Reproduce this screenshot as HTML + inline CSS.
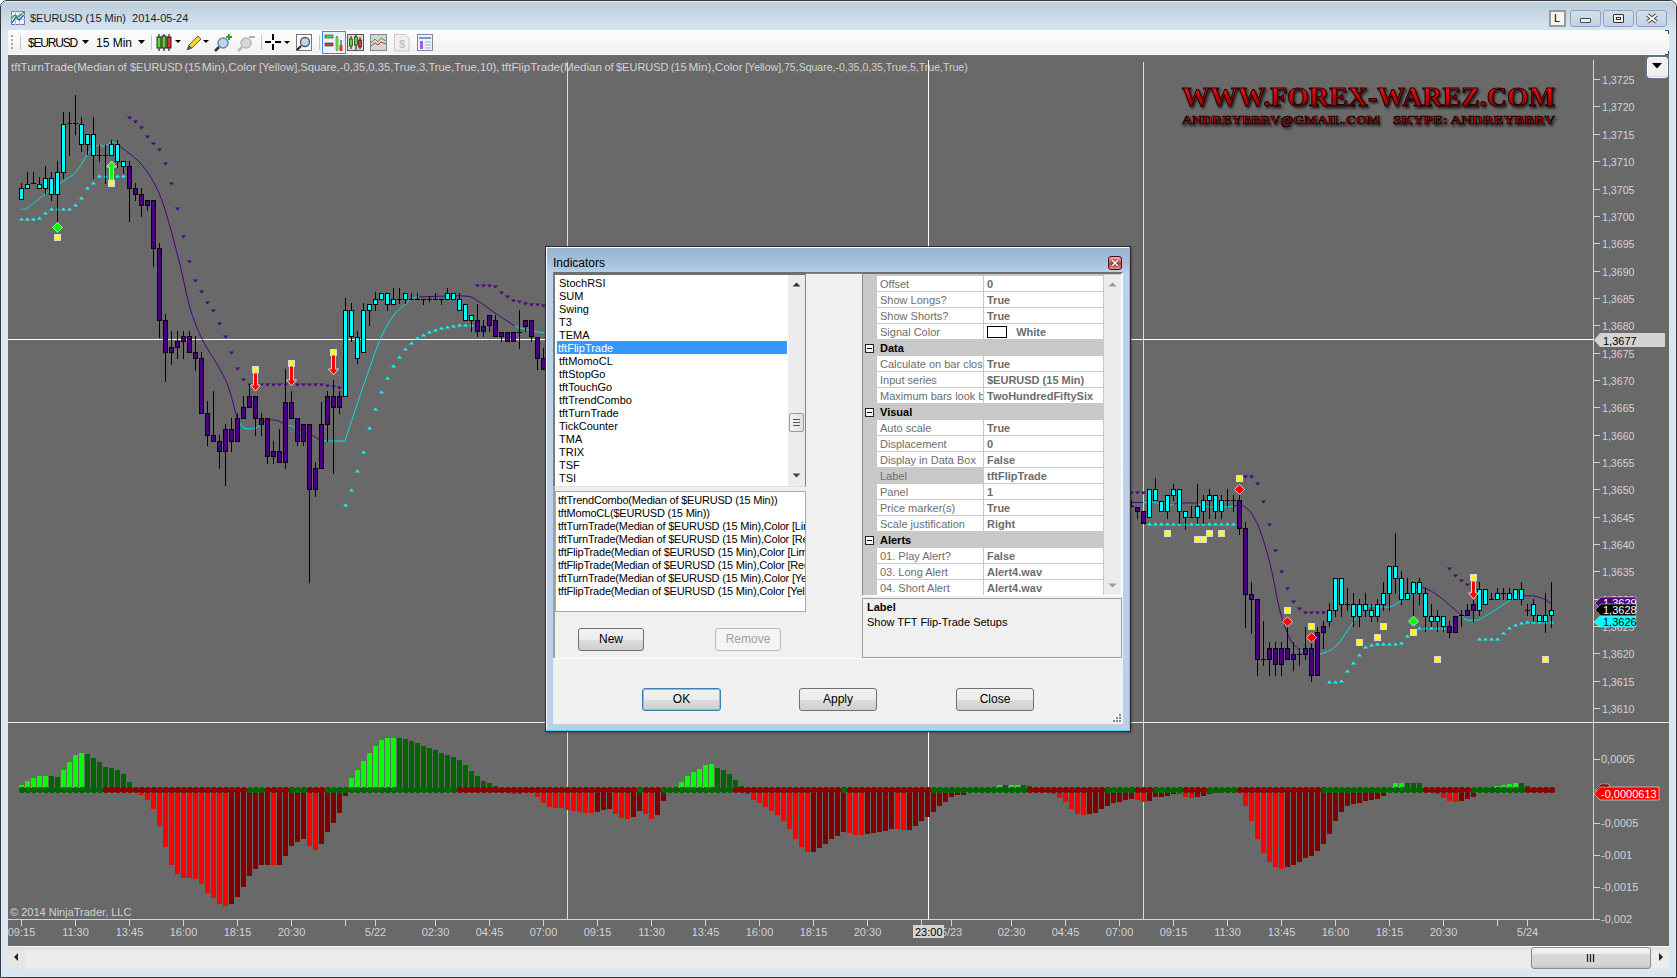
<!DOCTYPE html><html><head><meta charset="utf-8"><style>

*{box-sizing:border-box}
body{margin:0;width:1677px;height:978px;overflow:hidden;position:relative;background:#fff;font-family:'Liberation Sans',sans-serif}
.a{position:absolute}
.t{position:absolute;white-space:nowrap;line-height:1}
.btn{position:absolute;border:1px solid #707070;border-radius:3px;background:linear-gradient(#f2f2f2 0%,#ebebeb 50%,#dddddd 51%,#cfcfcf 100%);font-size:12px;color:#000;text-align:center}
.li{position:absolute;left:0;white-space:nowrap;font-size:11px;line-height:13px;height:13px}
.pr{position:absolute;left:0;width:241px;height:16px}
.pn{position:absolute;left:14px;width:106px;height:15px;background:#fff;color:#6d6d6d;font-size:11px;line-height:15px;padding-left:3px;padding-top:1px;overflow:hidden;white-space:nowrap}
.pv{position:absolute;left:121px;width:119px;height:15px;background:#fff;color:#6d6d6d;font-size:11px;font-weight:bold;line-height:15px;padding-left:3px;padding-top:1px;overflow:hidden;white-space:nowrap}
.pc{position:absolute;left:0;width:240px;height:16px;background:#c8c8c8;font-size:11px;font-weight:bold;line-height:16px;padding-left:17px;color:#000}

</style></head><body>
<div class="a" style="left:0;top:0;width:1677px;height:978px;border:1px solid #3a3a3a;border-radius:7px 7px 0 0;background:#d9e6f3"></div>
<div class="a" style="left:1px;top:1px;width:1675px;height:29px;border-radius:6px 6px 0 0;background:linear-gradient(#e9f0f7 0px,#bccddc 2px,#d7e5f2 29px)"></div>
<svg class="a" style="left:10px;top:10px" width="17" height="17"><rect x="1.5" y="1.5" width="13" height="13" fill="#f4f4fa" stroke="#7a7a9a"/><path d="M1 5.5H15M1 9.5H15M5.5 1V15M9.5 1V15" stroke="#b8b8d0" stroke-width="1"/><path d="M2 13 L6 7 L9 10 L14 5" stroke="#2060d0" fill="none" stroke-width="1.3"/><path d="M2 8 L5 5 L8 7 L14 2" stroke="#20b020" fill="none" stroke-width="1.3"/></svg>
<div class="t" style="left:30px;top:13px;font-size:11px;color:#1e1e1e">$EURUSD (15 Min)&nbsp;&nbsp;2014-05-24</div>
<div class="a" style="left:1549px;top:10px;width:17px;height:17px;border:2px solid #9a9a9a;background:#f4f4f4"></div>
<div class="t" style="left:1554px;top:13px;font-size:11px;color:#000">L</div>
<div class="a" style="left:1570px;top:10px;width:31px;height:17px;border:1px solid #8ea4c1;border-radius:3px;background:linear-gradient(#d2deea,#c3d2e2)"></div>
<div class="a" style="left:1603px;top:10px;width:31px;height:17px;border:1px solid #8ea4c1;border-radius:3px;background:linear-gradient(#d2deea,#c3d2e2)"></div>
<div class="a" style="left:1636px;top:10px;width:31px;height:17px;border:1px solid #8ea4c1;border-radius:3px;background:linear-gradient(#d2deea,#c3d2e2)"></div>
<div class="a" style="left:1580px;top:18px;width:11px;height:5px;border:1px solid #444;border-radius:1px;background:#f0f0f0"></div>
<div class="a" style="left:1613px;top:14px;width:11px;height:9px;border:1px solid #333;border-radius:1px;background:#f0f0f0"></div><div class="a" style="left:1616px;top:17px;width:5px;height:3px;border:1px solid #333"></div>
<svg class="a" style="left:1645px;top:13px" width="14" height="11"><path d="M2.5 2L11.5 9M11.5 2L2.5 9" stroke="#3a3a3a" stroke-width="4"/><path d="M2.5 2L11.5 9M11.5 2L2.5 9" stroke="#f4f4f4" stroke-width="2.2"/></svg>
<div class="a" style="left:8px;top:30px;width:1661px;height:25px;border-radius:2px;background:linear-gradient(#fdfdfd,#f1f1f1);border-bottom:1px solid #fff"></div>
<div class="a" style="left:11px;top:35px;width:2px;height:2px;background:#a8a8a8"></div>
<div class="a" style="left:11px;top:39px;width:2px;height:2px;background:#a8a8a8"></div>
<div class="a" style="left:11px;top:43px;width:2px;height:2px;background:#a8a8a8"></div>
<div class="a" style="left:11px;top:47px;width:2px;height:2px;background:#a8a8a8"></div>
<div class="a" style="left:20px;top:35px;width:1px;height:15px;background:#c4c4c4"></div>
<div class="a" style="left:151px;top:35px;width:1px;height:15px;background:#c4c4c4"></div>
<div class="a" style="left:261px;top:35px;width:1px;height:15px;background:#c4c4c4"></div>
<div class="a" style="left:319px;top:35px;width:1px;height:15px;background:#c4c4c4"></div>
<div class="t" style="left:28px;top:37px;font-size:12px;letter-spacing:-1.2px;color:#000">$EURUSD</div>
<svg class="a" style="left:82px;top:40px" width="8" height="5"><path d="M0 0H7L3.5 4Z" fill="#000"/></svg>
<div class="t" style="left:96px;top:37px;font-size:12px;color:#000">15 Min</div>
<svg class="a" style="left:138px;top:40px" width="8" height="5"><path d="M0 0H7L3.5 4Z" fill="#000"/></svg>
<svg class="a" style="left:156px;top:34px" width="36" height="18"><path d="M3 0V17M8 0V17M13 0V17" stroke="#000"/><rect x="1" y="3" width="4" height="11" fill="#5ad62f" stroke="#222"/><rect x="6" y="2" width="4" height="12" fill="#5ad62f" stroke="#222"/><rect x="11" y="3" width="4" height="11" fill="#e03030" stroke="#222"/><path d="M19 6H25L22 9Z" fill="#000"/></svg>
<svg class="a" style="left:185px;top:34px" width="24" height="18"><path d="M2 16L4 11L13 2L16 5L7 14Z" fill="#f5d33a" stroke="#806010"/><path d="M2 16L4 11L7 14Z" fill="#555"/><path d="M18 6H24L21 9Z" fill="#000"/></svg>
<svg class="a" style="left:214px;top:33px" width="20" height="19"><circle cx="9" cy="10" r="5" fill="#bcd6ee" stroke="#6a8aa8" stroke-width="1.5"/><path d="M5 14L1 18" stroke="#333" stroke-width="2.5"/><path d="M15 1V7M12 4H18" stroke="#22aa22" stroke-width="2"/></svg>
<svg class="a" style="left:237px;top:33px" width="20" height="19"><circle cx="9" cy="10" r="5" fill="#d8d8d8" stroke="#b8b8b8" stroke-width="1.5"/><path d="M5 14L1 18" stroke="#b8b8b8" stroke-width="2.5"/><path d="M12 4H18" stroke="#b0b0b0" stroke-width="2"/></svg>
<svg class="a" style="left:265px;top:34px" width="26" height="17"><path d="M8 0V6M8 10V16M0 8H6M10 8H16" stroke="#000" stroke-width="2"/><path d="M19 7H25L22 10Z" fill="#000"/></svg>
<svg class="a" style="left:295px;top:34px" width="18" height="18"><rect x="1.5" y="0.5" width="15" height="16" fill="#fafafa" stroke="#777"/><circle cx="10" cy="8" r="4.5" fill="#bcd6ee" stroke="#556" stroke-width="1.4"/><path d="M6 12L2 16" stroke="#222" stroke-width="2"/></svg>
<div class="a" style="left:322px;top:31px;width:24px;height:23px;border:1px solid #3c8ce8;background:#eaf3fc"></div>
<svg class="a" style="left:324px;top:34px" width="20" height="18"><rect x="1" y="1" width="8" height="3" fill="#5ad62f" stroke="#333" stroke-width=".6"/><rect x="1" y="9" width="8" height="3" fill="#e03030" stroke="#333" stroke-width=".6"/><path d="M13 2V17M17 6V17" stroke="#333"/><rect x="11.5" y="4" width="3" height="12" fill="#5ad62f"/><rect x="15.5" y="11" width="3" height="6" fill="#e03030"/></svg>
<svg class="a" style="left:347px;top:34px" width="18" height="18"><rect x=".5" y=".5" width="16" height="16" fill="#dcdcdc" stroke="#555"/><path d="M4 2V15M9 1V16M13 3V15" stroke="#111"/><rect x="2.5" y="5" width="3" height="7" fill="#5ad62f" stroke="#111" stroke-width=".6"/><rect x="7.5" y="3" width="3" height="8" fill="#5ad62f" stroke="#111" stroke-width=".6"/><rect x="11.5" y="6" width="3" height="7" fill="#e03030" stroke="#111" stroke-width=".6"/></svg>
<svg class="a" style="left:370px;top:34px" width="18" height="18"><rect x=".5" y=".5" width="16" height="16" fill="#d4d4d4" stroke="#888"/><path d="M1 9L5 5L8 8L11 4L16 7" stroke="#30b030" fill="none"/><path d="M1 12L5 9L8 11L11 8L16 10" stroke="#d03030" fill="none"/></svg>
<svg class="a" style="left:394px;top:34px" width="16" height="18"><path d="M.5 .5H11L15 4V17H.5Z" fill="#f0f0f0" stroke="#c8c8c8"/><text x="8" y="14" font-size="11" font-weight="bold" fill="#c0c0c0" text-anchor="middle" font-family="Liberation Sans">$</text></svg>
<svg class="a" style="left:417px;top:34px" width="16" height="18"><rect x=".5" y=".5" width="15" height="16" fill="#eef3fa" stroke="#7a8aa0"/><rect x="2" y="3" width="12" height="2" fill="#6a9ad0"/><rect x="3" y="7" width="3" height="8" fill="#9a60e0"/><path d="M8 8H14M8 11H14M8 14H14" stroke="#a0b0c8"/></svg>
<div class="a" style="left:8px;top:55px;width:1661px;height:891px;background:#696969"></div>
<div class="a" style="left:8px;top:946px;width:1661px;height:24px;background:linear-gradient(#dedede,#ececec 25%,#ececec 85%,#e6e6e6)"></div><div class="a" style="left:8px;top:947px;width:17px;height:23px;background:rgba(0,0,0,.025)"></div>
<div class="a" style="left:8px;top:946px;width:1661px;height:1px;background:#fafafa"></div>
<svg class="a" style="left:12px;top:952px" width="8" height="10"><path d="M6 1V9L2 5Z" fill="#222"/></svg>
<svg class="a" style="left:1657px;top:952px" width="8" height="10"><path d="M2 1V9L6 5Z" fill="#222"/></svg>
<div class="a" style="left:1531px;top:947px;width:120px;height:22px;border:1px solid #8a8a8a;border-radius:3px;background:linear-gradient(#f4f4f4 0%,#ececec 30%,#d9d9d9 31%,#d4d4d4 85%,#c0c0c0 100%)"></div>
<svg class="a" style="left:1586px;top:953px" width="10" height="10"><path d="M1.5 1V9M4.5 1V9M7.5 1V9" stroke="#222" stroke-width="1.3"/></svg>
<svg class="a" style="left:0;top:0" width="1677" height="978">
<defs><filter id="sh" x="-5%" y="-20%" width="110%" height="140%"><feDropShadow dx="1.5" dy="2" stdDeviation="1.2" flood-color="#000" flood-opacity="0.7"/></filter><linearGradient id="lg" x1="0" y1="0" x2="0" y2="1"><stop offset="0" stop-color="#ff3030"/><stop offset=".5" stop-color="#d00000"/><stop offset="1" stop-color="#800000"/></linearGradient></defs>
<path d="M567.5 62V919M1143.5 62V919" stroke="#dcdcdc" stroke-width="1"/>
<path d="M928.5 60V919" stroke="#fff" stroke-width="1"/>
<path d="M8 339.5H1593" stroke="#fff" stroke-width="1"/>
<path d="M8 722.5H1669" stroke="#e8e8e8" stroke-width="1"/>
<path d="M1593.5 60V919.5M8 919.5H1593.5" stroke="#d3d3d3" stroke-width="1"/>
<path d="M1593 79.5H1600" stroke="#d3d3d3"/>
<text x="1602" y="84" font-size="11" fill="#d3d3d3" font-family="Liberation Sans" textLength="32.5" lengthAdjust="spacingAndGlyphs">1,3725</text>
<path d="M1593 106.5H1600" stroke="#d3d3d3"/>
<text x="1602" y="111" font-size="11" fill="#d3d3d3" font-family="Liberation Sans" textLength="32.5" lengthAdjust="spacingAndGlyphs">1,3720</text>
<path d="M1593 134.5H1600" stroke="#d3d3d3"/>
<text x="1602" y="139" font-size="11" fill="#d3d3d3" font-family="Liberation Sans" textLength="32.5" lengthAdjust="spacingAndGlyphs">1,3715</text>
<path d="M1593 161.5H1600" stroke="#d3d3d3"/>
<text x="1602" y="166" font-size="11" fill="#d3d3d3" font-family="Liberation Sans" textLength="32.5" lengthAdjust="spacingAndGlyphs">1,3710</text>
<path d="M1593 189.5H1600" stroke="#d3d3d3"/>
<text x="1602" y="194" font-size="11" fill="#d3d3d3" font-family="Liberation Sans" textLength="32.5" lengthAdjust="spacingAndGlyphs">1,3705</text>
<path d="M1593 216.5H1600" stroke="#d3d3d3"/>
<text x="1602" y="221" font-size="11" fill="#d3d3d3" font-family="Liberation Sans" textLength="32.5" lengthAdjust="spacingAndGlyphs">1,3700</text>
<path d="M1593 243.5H1600" stroke="#d3d3d3"/>
<text x="1602" y="248" font-size="11" fill="#d3d3d3" font-family="Liberation Sans" textLength="32.5" lengthAdjust="spacingAndGlyphs">1,3695</text>
<path d="M1593 271.5H1600" stroke="#d3d3d3"/>
<text x="1602" y="276" font-size="11" fill="#d3d3d3" font-family="Liberation Sans" textLength="32.5" lengthAdjust="spacingAndGlyphs">1,3690</text>
<path d="M1593 298.5H1600" stroke="#d3d3d3"/>
<text x="1602" y="303" font-size="11" fill="#d3d3d3" font-family="Liberation Sans" textLength="32.5" lengthAdjust="spacingAndGlyphs">1,3685</text>
<path d="M1593 325.5H1600" stroke="#d3d3d3"/>
<text x="1602" y="330" font-size="11" fill="#d3d3d3" font-family="Liberation Sans" textLength="32.5" lengthAdjust="spacingAndGlyphs">1,3680</text>
<path d="M1593 353.5H1600" stroke="#d3d3d3"/>
<text x="1602" y="358" font-size="11" fill="#d3d3d3" font-family="Liberation Sans" textLength="32.5" lengthAdjust="spacingAndGlyphs">1,3675</text>
<path d="M1593 380.5H1600" stroke="#d3d3d3"/>
<text x="1602" y="385" font-size="11" fill="#d3d3d3" font-family="Liberation Sans" textLength="32.5" lengthAdjust="spacingAndGlyphs">1,3670</text>
<path d="M1593 407.5H1600" stroke="#d3d3d3"/>
<text x="1602" y="412" font-size="11" fill="#d3d3d3" font-family="Liberation Sans" textLength="32.5" lengthAdjust="spacingAndGlyphs">1,3665</text>
<path d="M1593 435.5H1600" stroke="#d3d3d3"/>
<text x="1602" y="440" font-size="11" fill="#d3d3d3" font-family="Liberation Sans" textLength="32.5" lengthAdjust="spacingAndGlyphs">1,3660</text>
<path d="M1593 462.5H1600" stroke="#d3d3d3"/>
<text x="1602" y="467" font-size="11" fill="#d3d3d3" font-family="Liberation Sans" textLength="32.5" lengthAdjust="spacingAndGlyphs">1,3655</text>
<path d="M1593 489.5H1600" stroke="#d3d3d3"/>
<text x="1602" y="494" font-size="11" fill="#d3d3d3" font-family="Liberation Sans" textLength="32.5" lengthAdjust="spacingAndGlyphs">1,3650</text>
<path d="M1593 517.5H1600" stroke="#d3d3d3"/>
<text x="1602" y="522" font-size="11" fill="#d3d3d3" font-family="Liberation Sans" textLength="32.5" lengthAdjust="spacingAndGlyphs">1,3645</text>
<path d="M1593 544.5H1600" stroke="#d3d3d3"/>
<text x="1602" y="549" font-size="11" fill="#d3d3d3" font-family="Liberation Sans" textLength="32.5" lengthAdjust="spacingAndGlyphs">1,3640</text>
<path d="M1593 571.5H1600" stroke="#d3d3d3"/>
<text x="1602" y="576" font-size="11" fill="#d3d3d3" font-family="Liberation Sans" textLength="32.5" lengthAdjust="spacingAndGlyphs">1,3635</text>
<path d="M1593 599.5H1600" stroke="#d3d3d3"/>
<text x="1602" y="604" font-size="11" fill="#d3d3d3" font-family="Liberation Sans" textLength="32.5" lengthAdjust="spacingAndGlyphs">1,3630</text>
<path d="M1593 626.5H1600" stroke="#d3d3d3"/>
<text x="1602" y="631" font-size="11" fill="#d3d3d3" font-family="Liberation Sans" textLength="32.5" lengthAdjust="spacingAndGlyphs">1,3625</text>
<path d="M1593 653.5H1600" stroke="#d3d3d3"/>
<text x="1602" y="658" font-size="11" fill="#d3d3d3" font-family="Liberation Sans" textLength="32.5" lengthAdjust="spacingAndGlyphs">1,3620</text>
<path d="M1593 681.5H1600" stroke="#d3d3d3"/>
<text x="1602" y="686" font-size="11" fill="#d3d3d3" font-family="Liberation Sans" textLength="32.5" lengthAdjust="spacingAndGlyphs">1,3615</text>
<path d="M1593 708.5H1600" stroke="#d3d3d3"/>
<text x="1602" y="713" font-size="11" fill="#d3d3d3" font-family="Liberation Sans" textLength="32.5" lengthAdjust="spacingAndGlyphs">1,3610</text>
<path d="M1593 759.5H1600" stroke="#d3d3d3"/>
<text x="1601" y="763" font-size="11" fill="#d3d3d3" font-family="Liberation Sans">0,0005</text>
<path d="M1593 823.5H1600" stroke="#d3d3d3"/>
<text x="1601" y="827" font-size="11" fill="#d3d3d3" font-family="Liberation Sans">-0,0005</text>
<path d="M1593 855.5H1600" stroke="#d3d3d3"/>
<text x="1601" y="859" font-size="11" fill="#d3d3d3" font-family="Liberation Sans">-0,001</text>
<path d="M1593 887.5H1600" stroke="#d3d3d3"/>
<text x="1601" y="891" font-size="11" fill="#d3d3d3" font-family="Liberation Sans">-0,0015</text>
<path d="M1593 919.5H1600" stroke="#d3d3d3"/>
<text x="1601" y="923" font-size="11" fill="#d3d3d3" font-family="Liberation Sans">-0,002</text>
<path d="M21.5 919V926" stroke="#d3d3d3"/>
<text x="21.5" y="936" font-size="11" fill="#d3d3d3" text-anchor="middle" font-family="Liberation Sans">09:15</text>
<path d="M75.5 919V926" stroke="#d3d3d3"/>
<text x="75.5" y="936" font-size="11" fill="#d3d3d3" text-anchor="middle" font-family="Liberation Sans">11:30</text>
<path d="M129.5 919V926" stroke="#d3d3d3"/>
<text x="129.5" y="936" font-size="11" fill="#d3d3d3" text-anchor="middle" font-family="Liberation Sans">13:45</text>
<path d="M183.5 919V926" stroke="#d3d3d3"/>
<text x="183.5" y="936" font-size="11" fill="#d3d3d3" text-anchor="middle" font-family="Liberation Sans">16:00</text>
<path d="M237.5 919V926" stroke="#d3d3d3"/>
<text x="237.5" y="936" font-size="11" fill="#d3d3d3" text-anchor="middle" font-family="Liberation Sans">18:15</text>
<path d="M291.5 919V926" stroke="#d3d3d3"/>
<text x="291.5" y="936" font-size="11" fill="#d3d3d3" text-anchor="middle" font-family="Liberation Sans">20:30</text>
<path d="M345.5 919V926" stroke="#d3d3d3"/>
<path d="M375.5 919V926" stroke="#d3d3d3"/>
<text x="375.5" y="936" font-size="11" fill="#d3d3d3" text-anchor="middle" font-family="Liberation Sans">5/22</text>
<path d="M435.5 919V926" stroke="#d3d3d3"/>
<text x="435.5" y="936" font-size="11" fill="#d3d3d3" text-anchor="middle" font-family="Liberation Sans">02:30</text>
<path d="M489.5 919V926" stroke="#d3d3d3"/>
<text x="489.5" y="936" font-size="11" fill="#d3d3d3" text-anchor="middle" font-family="Liberation Sans">04:45</text>
<path d="M543.5 919V926" stroke="#d3d3d3"/>
<text x="543.5" y="936" font-size="11" fill="#d3d3d3" text-anchor="middle" font-family="Liberation Sans">07:00</text>
<path d="M597.5 919V926" stroke="#d3d3d3"/>
<text x="597.5" y="936" font-size="11" fill="#d3d3d3" text-anchor="middle" font-family="Liberation Sans">09:15</text>
<path d="M651.5 919V926" stroke="#d3d3d3"/>
<text x="651.5" y="936" font-size="11" fill="#d3d3d3" text-anchor="middle" font-family="Liberation Sans">11:30</text>
<path d="M705.5 919V926" stroke="#d3d3d3"/>
<text x="705.5" y="936" font-size="11" fill="#d3d3d3" text-anchor="middle" font-family="Liberation Sans">13:45</text>
<path d="M759.5 919V926" stroke="#d3d3d3"/>
<text x="759.5" y="936" font-size="11" fill="#d3d3d3" text-anchor="middle" font-family="Liberation Sans">16:00</text>
<path d="M813.5 919V926" stroke="#d3d3d3"/>
<text x="813.5" y="936" font-size="11" fill="#d3d3d3" text-anchor="middle" font-family="Liberation Sans">18:15</text>
<path d="M867.5 919V926" stroke="#d3d3d3"/>
<text x="867.5" y="936" font-size="11" fill="#d3d3d3" text-anchor="middle" font-family="Liberation Sans">20:30</text>
<path d="M921.5 919V926" stroke="#d3d3d3"/>
<path d="M951.5 919V926" stroke="#d3d3d3"/>
<text x="951.5" y="936" font-size="11" fill="#d3d3d3" text-anchor="middle" font-family="Liberation Sans">5/23</text>
<path d="M1011.5 919V926" stroke="#d3d3d3"/>
<text x="1011.5" y="936" font-size="11" fill="#d3d3d3" text-anchor="middle" font-family="Liberation Sans">02:30</text>
<path d="M1065.5 919V926" stroke="#d3d3d3"/>
<text x="1065.5" y="936" font-size="11" fill="#d3d3d3" text-anchor="middle" font-family="Liberation Sans">04:45</text>
<path d="M1119.5 919V926" stroke="#d3d3d3"/>
<text x="1119.5" y="936" font-size="11" fill="#d3d3d3" text-anchor="middle" font-family="Liberation Sans">07:00</text>
<path d="M1173.5 919V926" stroke="#d3d3d3"/>
<text x="1173.5" y="936" font-size="11" fill="#d3d3d3" text-anchor="middle" font-family="Liberation Sans">09:15</text>
<path d="M1227.5 919V926" stroke="#d3d3d3"/>
<text x="1227.5" y="936" font-size="11" fill="#d3d3d3" text-anchor="middle" font-family="Liberation Sans">11:30</text>
<path d="M1281.5 919V926" stroke="#d3d3d3"/>
<text x="1281.5" y="936" font-size="11" fill="#d3d3d3" text-anchor="middle" font-family="Liberation Sans">13:45</text>
<path d="M1335.5 919V926" stroke="#d3d3d3"/>
<text x="1335.5" y="936" font-size="11" fill="#d3d3d3" text-anchor="middle" font-family="Liberation Sans">16:00</text>
<path d="M1389.5 919V926" stroke="#d3d3d3"/>
<text x="1389.5" y="936" font-size="11" fill="#d3d3d3" text-anchor="middle" font-family="Liberation Sans">18:15</text>
<path d="M1443.5 919V926" stroke="#d3d3d3"/>
<text x="1443.5" y="936" font-size="11" fill="#d3d3d3" text-anchor="middle" font-family="Liberation Sans">20:30</text>
<path d="M1497.5 919V926" stroke="#d3d3d3"/>
<path d="M1527.5 919V926" stroke="#d3d3d3"/>
<text x="1527.5" y="936" font-size="11" fill="#d3d3d3" text-anchor="middle" font-family="Liberation Sans">5/24</text>
<text x="10" y="916" font-size="11" fill="#d3d3d3" font-family="Liberation Sans">© 2014 NinjaTrader, LLC</text>
<text x="11" y="71" font-size="11" fill="#d3d3d3" font-family="Liberation Sans" textLength="103.9" lengthAdjust="spacingAndGlyphs">tftTurnTrade(Median</text>
<text x="117.4" y="71" font-size="11" fill="#d3d3d3" font-family="Liberation Sans">of</text>
<text x="130" y="71" font-size="11" fill="#d3d3d3" font-family="Liberation Sans">$EURUSD</text>
<text x="184.6" y="71" font-size="11" fill="#d3d3d3" font-family="Liberation Sans">(15</text>
<text x="201.8" y="71" font-size="11" fill="#d3d3d3" font-family="Liberation Sans" textLength="54.7" lengthAdjust="spacingAndGlyphs">Min),Color</text>
<text x="259" y="71" font-size="11" fill="#d3d3d3" font-family="Liberation Sans" textLength="240.3" lengthAdjust="spacingAndGlyphs">[Yellow],Square,-0,35,0,35,True,3,True,True,10),</text>
<text x="501.8" y="71" font-size="11" fill="#d3d3d3" font-family="Liberation Sans" textLength="100.2" lengthAdjust="spacingAndGlyphs">tftFlipTrade(Median</text>
<text x="604.5" y="71" font-size="11" fill="#d3d3d3" font-family="Liberation Sans">of</text>
<text x="616" y="71" font-size="11" fill="#d3d3d3" font-family="Liberation Sans">$EURUSD</text>
<text x="670.7" y="71" font-size="11" fill="#d3d3d3" font-family="Liberation Sans">(15</text>
<text x="688.6" y="71" font-size="11" fill="#d3d3d3" font-family="Liberation Sans" textLength="54.1" lengthAdjust="spacingAndGlyphs">Min),Color</text>
<text x="745.2" y="71" font-size="11" fill="#d3d3d3" font-family="Liberation Sans" textLength="222.5" lengthAdjust="spacingAndGlyphs">[Yellow],75,Square,-0,35,0,35,True,5,True,True)</text>
<rect x="913" y="925" width="31" height="13" fill="#d3d3d3"/><text x="915" y="936" font-size="11" fill="#000" font-family="Liberation Sans">23:00</text>
<path d="M1594 340L1600 333H1665V347H1600Z" fill="#d3d3d3"/><text x="1603" y="345" font-size="11" fill="#000" font-family="Liberation Sans">1,3677</text>
<g filter="url(#sh)"><text x="1182" y="106" font-size="28" font-weight="bold" font-family="Liberation Serif" fill="url(#lg)" stroke="#200000" stroke-width="1.1" textLength="373" lengthAdjust="spacingAndGlyphs">WWW.FOREX-WAREZ.COM</text><text x="1182" y="124" font-size="12" font-weight="bold" font-family="Liberation Serif" fill="#b00000" stroke="#200000" stroke-width="0.7" textLength="198" lengthAdjust="spacingAndGlyphs">ANDREYBBRV@GMAIL.COM</text><text x="1393" y="124" font-size="12" font-weight="bold" font-family="Liberation Serif" fill="#b00000" stroke="#200000" stroke-width="0.7" textLength="162" lengthAdjust="spacingAndGlyphs">SKYPE: ANDREYBBRV</text></g>
<path d="M21 209 C22.0 208.8 23.0 210.5 27 208 C31.0 205.5 39.2 198.3 45 194 C50.8 189.7 56.8 185.7 62 182 C67.2 178.3 71.8 176.5 76 172 C80.2 167.5 84.0 159.3 87 155 C90.0 150.7 91.0 147.5 94 146 C97.0 144.5 102.0 146.7 105 146 C108.0 145.3 109.8 142.2 112 142 C114.2 141.8 117.0 144.5 118 145" fill="none" stroke="#00e5e5" stroke-width="1"/>
<path d="M118 145 C122.0 148.3 135.2 157.0 142 165 C148.8 173.0 154.2 182.2 159 193 C163.8 203.8 167.3 217.3 171 230 C174.7 242.7 177.8 256.0 181 269 C184.2 282.0 186.5 296.3 190 308 C193.5 319.7 197.3 329.3 202 339 C206.7 348.7 213.7 358.2 218 366 C222.3 373.8 224.8 377.3 228 386 C231.2 394.7 235.5 412.7 237 418" fill="none" stroke="#4b0082" stroke-width="1"/>
<path d="M237 418 C238.2 419.7 240.8 426.3 244 428 C247.2 429.7 253.0 428.8 256 428 C259.0 427.2 261.0 423.8 262 423" fill="none" stroke="#00e5e5" stroke-width="1"/>
<path d="M262 423 C263.3 422.5 267.2 420.3 270 420 C272.8 419.7 276.3 420.0 279 421 C281.7 422.0 284.8 425.2 286 426" fill="none" stroke="#4b0082" stroke-width="1"/>
<path d="M286 426 C287.0 426.0 289.8 425.0 292 426 C294.2 427.0 296.8 430.8 299 432 C301.2 433.2 304.0 432.8 305 433" fill="none" stroke="#00e5e5" stroke-width="1"/>
<path d="M305 433 C306.2 433.3 309.3 433.7 312 435 C314.7 436.3 319.5 440.0 321 441" fill="none" stroke="#4b0082" stroke-width="1"/>
<path d="M321 441 L345 441" fill="none" stroke="#00e5e5" stroke-width="1"/>
<path d="M345 441 C348.0 432.0 357.2 403.8 363 387 C368.8 370.2 374.8 352.0 380 340 C385.2 328.0 388.7 321.8 394 315 C399.3 308.2 407.8 302.0 412 299 C416.2 296.0 417.8 297.3 419 297" fill="none" stroke="#00e5e5" stroke-width="1"/>
<path d="M419 297 C426.5 296.8 454.2 295.3 464 296 C473.8 296.7 472.8 298.2 478 301 C483.2 303.8 488.8 308.8 495 313 C501.2 317.2 511.7 323.8 515 326" fill="none" stroke="#4b0082" stroke-width="1"/>
<path d="M515 326 C516.5 326.5 519.2 327.8 524 329 C528.8 330.2 540.7 332.3 544 333" fill="none" stroke="#00e5e5" stroke-width="1"/>
<path d="M1131 502.5 L1143 502.5" fill="none" stroke="#4b0082" stroke-width="1"/>
<path d="M1143 502.5 C1145.0 502.5 1152.0 502.1 1155 502.5 C1158.0 502.9 1158.8 504.4 1161 505 C1163.2 505.6 1165.8 506.2 1168 506 C1170.2 505.8 1173.0 504.3 1174 504" fill="none" stroke="#00e5e5" stroke-width="1"/>
<path d="M1174 504 C1175.0 503.8 1176.2 503.2 1180 503 C1183.8 502.8 1194.2 503.0 1197 503" fill="none" stroke="#4b0082" stroke-width="1"/>
<path d="M1197 503 C1198.0 503.5 1200.0 505.3 1203 506 C1206.0 506.7 1210.0 506.9 1215 507 C1220.0 507.1 1230.0 506.6 1233 506.5" fill="none" stroke="#00e5e5" stroke-width="1"/>
<path d="M1233 506.5 C1234.0 506.2 1237.0 504.9 1239 505 C1241.0 505.1 1242.8 505.5 1245 507 C1247.2 508.5 1249.3 509.7 1252 514 C1254.7 518.3 1257.8 524.0 1261 533 C1264.2 542.0 1267.8 555.0 1271 568 C1274.2 581.0 1276.8 599.2 1280 611 C1283.2 622.8 1286.8 632.5 1290 639 C1293.2 645.5 1297.5 648.2 1299 650" fill="none" stroke="#4b0082" stroke-width="1"/>
<path d="M1299 650 C1300.5 650.5 1304.5 652.3 1308 653 C1311.5 653.7 1315.5 655.0 1320 654 C1324.5 653.0 1330.3 651.0 1335 647 C1339.7 643.0 1343.7 636.0 1348 630 C1352.3 624.0 1357.0 615.0 1361 611 C1365.0 607.0 1367.2 606.7 1372 606 C1376.8 605.3 1384.5 608.3 1390 607 C1395.5 605.7 1400.2 601.2 1405 598 C1409.8 594.8 1416.7 589.7 1419 588" fill="none" stroke="#00e5e5" stroke-width="1"/>
<path d="M1419 588 C1420.0 588.0 1421.5 586.5 1425 588 C1428.5 589.5 1434.0 592.5 1440 597 C1446.0 601.5 1457.5 612.0 1461 615" fill="none" stroke="#4b0082" stroke-width="1"/>
<path d="M1461 615 C1462.0 615.8 1464.0 619.2 1467 620 C1470.0 620.8 1477.0 620.0 1479 620" fill="none" stroke="#00e5e5" stroke-width="1"/>
<path d="M1479 620 C1481.7 618.3 1489.2 613.7 1495 610 C1500.8 606.3 1509.8 600.3 1514 598 C1518.2 595.7 1519.0 596.3 1520 596" fill="none" stroke="#00e5e5" stroke-width="1"/>
<path d="M1520 596 C1522.2 596.0 1529.0 595.5 1533 596 C1537.0 596.5 1540.8 597.7 1544 599 C1547.2 600.3 1550.7 603.2 1552 604" fill="none" stroke="#4b0082" stroke-width="1"/>
<path d="M19 220.5H24L21.5 217.5Z" fill="#00ffff"/>
<path d="M25 220.5H30L27.5 217.5Z" fill="#00ffff"/>
<path d="M31 220.5H36L33.5 217.5Z" fill="#00ffff"/>
<path d="M37 219.5H42L39.5 216.5Z" fill="#00ffff"/>
<path d="M43 214.5H48L45.5 211.5Z" fill="#00ffff"/>
<path d="M49 210.5H54L51.5 207.5Z" fill="#00ffff"/>
<path d="M55 210.5H60L57.5 207.5Z" fill="#00ffff"/>
<path d="M61 210.5H66L63.5 207.5Z" fill="#00ffff"/>
<path d="M67 210.5H72L69.5 207.5Z" fill="#00ffff"/>
<path d="M73 206.5H78L75.5 203.5Z" fill="#00ffff"/>
<path d="M79 199.5H84L81.5 196.5Z" fill="#00ffff"/>
<path d="M85 189.5H90L87.5 186.5Z" fill="#00ffff"/>
<path d="M91 184.5H96L93.5 181.5Z" fill="#00ffff"/>
<path d="M97 177.5H102L99.5 174.5Z" fill="#00ffff"/>
<path d="M103 177.5H108L105.5 174.5Z" fill="#00ffff"/>
<path d="M115 177.5H120L117.5 174.5Z" fill="#00ffff"/>
<path d="M121 177.5H126L123.5 174.5Z" fill="#00ffff"/>
<path d="M343 506.5H348L345.5 503.5Z" fill="#00ffff"/>
<path d="M349 491.5H354L351.5 488.5Z" fill="#00ffff"/>
<path d="M355 472.5H360L357.5 469.5Z" fill="#00ffff"/>
<path d="M361 453.5H366L363.5 450.5Z" fill="#00ffff"/>
<path d="M367 429.5H372L369.5 426.5Z" fill="#00ffff"/>
<path d="M373 410.5H378L375.5 407.5Z" fill="#00ffff"/>
<path d="M379 393.5H384L381.5 390.5Z" fill="#00ffff"/>
<path d="M385 379.5H390L387.5 376.5Z" fill="#00ffff"/>
<path d="M391 367.5H396L393.5 364.5Z" fill="#00ffff"/>
<path d="M397 358.5H402L399.5 355.5Z" fill="#00ffff"/>
<path d="M403 350.5H408L405.5 347.5Z" fill="#00ffff"/>
<path d="M409 344.5H414L411.5 341.5Z" fill="#00ffff"/>
<path d="M415 339.5H420L417.5 336.5Z" fill="#00ffff"/>
<path d="M421 336.5H426L423.5 333.5Z" fill="#00ffff"/>
<path d="M427 333.5H432L429.5 330.5Z" fill="#00ffff"/>
<path d="M433 331.5H438L435.5 328.5Z" fill="#00ffff"/>
<path d="M439 329.5H444L441.5 326.5Z" fill="#00ffff"/>
<path d="M445 328.5H450L447.5 325.5Z" fill="#00ffff"/>
<path d="M451 327.5H456L453.5 324.5Z" fill="#00ffff"/>
<path d="M457 326.5H462L459.5 323.5Z" fill="#00ffff"/>
<path d="M463 326.5H468L465.5 323.5Z" fill="#00ffff"/>
<path d="M469 326.5H474L471.5 323.5Z" fill="#00ffff"/>
<path d="M1327 683.5H1332L1329.5 680.5Z" fill="#00ffff"/>
<path d="M1333 683.5H1338L1335.5 680.5Z" fill="#00ffff"/>
<path d="M1339 682.5H1344L1341.5 679.5Z" fill="#00ffff"/>
<path d="M1345 672.5H1350L1347.5 669.5Z" fill="#00ffff"/>
<path d="M1351 664.5H1356L1353.5 661.5Z" fill="#00ffff"/>
<path d="M1357 656.5H1362L1359.5 653.5Z" fill="#00ffff"/>
<path d="M1363 648.5H1368L1365.5 645.5Z" fill="#00ffff"/>
<path d="M1369 646.5H1374L1371.5 643.5Z" fill="#00ffff"/>
<path d="M1375 645.5H1380L1377.5 642.5Z" fill="#00ffff"/>
<path d="M1381 645.5H1386L1383.5 642.5Z" fill="#00ffff"/>
<path d="M1387 645.5H1392L1389.5 642.5Z" fill="#00ffff"/>
<path d="M1393 645.5H1398L1395.5 642.5Z" fill="#00ffff"/>
<path d="M1399 644.5H1404L1401.5 641.5Z" fill="#00ffff"/>
<path d="M1405 637.5H1410L1407.5 634.5Z" fill="#00ffff"/>
<path d="M1417 629.5H1422L1419.5 626.5Z" fill="#00ffff"/>
<path d="M1423 629.5H1428L1425.5 626.5Z" fill="#00ffff"/>
<path d="M1429 629.5H1434L1431.5 626.5Z" fill="#00ffff"/>
<path d="M1435 629.5H1440L1437.5 626.5Z" fill="#00ffff"/>
<path d="M1441 629.5H1446L1443.5 626.5Z" fill="#00ffff"/>
<path d="M1477 640.5H1482L1479.5 637.5Z" fill="#00ffff"/>
<path d="M1483 640.5H1488L1485.5 637.5Z" fill="#00ffff"/>
<path d="M1489 640.5H1494L1491.5 637.5Z" fill="#00ffff"/>
<path d="M1495 640.5H1500L1497.5 637.5Z" fill="#00ffff"/>
<path d="M1501 634.5H1506L1503.5 631.5Z" fill="#00ffff"/>
<path d="M1507 629.5H1512L1509.5 626.5Z" fill="#00ffff"/>
<path d="M1513 626.5H1518L1515.5 623.5Z" fill="#00ffff"/>
<path d="M1519 624.5H1524L1521.5 621.5Z" fill="#00ffff"/>
<path d="M1525 623.5H1530L1527.5 620.5Z" fill="#00ffff"/>
<path d="M1531 623.5H1536L1533.5 620.5Z" fill="#00ffff"/>
<path d="M1537 623.5H1542L1539.5 620.5Z" fill="#00ffff"/>
<path d="M1543 623.5H1548L1545.5 620.5Z" fill="#00ffff"/>
<path d="M1549 623.5H1554L1551.5 620.5Z" fill="#00ffff"/>
<path d="M1147 525.5H1152L1149.5 522.5Z" fill="#00ffff"/>
<path d="M1153 525.5H1158L1155.5 522.5Z" fill="#00ffff"/>
<path d="M1159 525.5H1164L1161.5 522.5Z" fill="#00ffff"/>
<path d="M1165 525.5H1170L1167.5 522.5Z" fill="#00ffff"/>
<path d="M1171 525.5H1176L1173.5 522.5Z" fill="#00ffff"/>
<path d="M1177 525.5H1182L1179.5 522.5Z" fill="#00ffff"/>
<path d="M1183 525.5H1188L1185.5 522.5Z" fill="#00ffff"/>
<path d="M1189 525.5H1194L1191.5 522.5Z" fill="#00ffff"/>
<path d="M1195 525.5H1200L1197.5 522.5Z" fill="#00ffff"/>
<path d="M1201 525.5H1206L1203.5 522.5Z" fill="#00ffff"/>
<path d="M1207 525.5H1212L1209.5 522.5Z" fill="#00ffff"/>
<path d="M1213 525.5H1218L1215.5 522.5Z" fill="#00ffff"/>
<path d="M1219 525.5H1224L1221.5 522.5Z" fill="#00ffff"/>
<path d="M1225 525.5H1230L1227.5 522.5Z" fill="#00ffff"/>
<path d="M1231 525.5H1236L1233.5 522.5Z" fill="#00ffff"/>
<path d="M127 116.5H132L129.5 119.5Z" fill="#4b0082"/>
<path d="M133 120.5H138L135.5 123.5Z" fill="#4b0082"/>
<path d="M139 126.5H144L141.5 129.5Z" fill="#4b0082"/>
<path d="M145 135.5H150L147.5 138.5Z" fill="#4b0082"/>
<path d="M151 142.5H156L153.5 145.5Z" fill="#4b0082"/>
<path d="M157 148.5H162L159.5 151.5Z" fill="#4b0082"/>
<path d="M163 162.5H168L165.5 165.5Z" fill="#4b0082"/>
<path d="M169 182.5H174L171.5 185.5Z" fill="#4b0082"/>
<path d="M175 207.5H180L177.5 210.5Z" fill="#4b0082"/>
<path d="M181 235.5H186L183.5 238.5Z" fill="#4b0082"/>
<path d="M187 260.5H192L189.5 263.5Z" fill="#4b0082"/>
<path d="M193 279.5H198L195.5 282.5Z" fill="#4b0082"/>
<path d="M199 290.5H204L201.5 293.5Z" fill="#4b0082"/>
<path d="M205 301.5H210L207.5 304.5Z" fill="#4b0082"/>
<path d="M211 309.5H216L213.5 312.5Z" fill="#4b0082"/>
<path d="M217 322.5H222L219.5 325.5Z" fill="#4b0082"/>
<path d="M223 335.5H228L225.5 338.5Z" fill="#4b0082"/>
<path d="M229 351.5H234L231.5 354.5Z" fill="#4b0082"/>
<path d="M235 367.5H240L237.5 370.5Z" fill="#4b0082"/>
<path d="M241 378.5H246L243.5 381.5Z" fill="#4b0082"/>
<path d="M325 384.5H330L327.5 387.5Z" fill="#4b0082"/>
<path d="M331 385.5H336L333.5 388.5Z" fill="#4b0082"/>
<path d="M337 386.5H342L339.5 389.5Z" fill="#4b0082"/>
<path d="M475 284.5H480L477.5 287.5Z" fill="#4b0082"/>
<path d="M481 284.5H486L483.5 287.5Z" fill="#4b0082"/>
<path d="M487 284.5H492L489.5 287.5Z" fill="#4b0082"/>
<path d="M493 285.5H498L495.5 288.5Z" fill="#4b0082"/>
<path d="M499 291.5H504L501.5 294.5Z" fill="#4b0082"/>
<path d="M505 295.5H510L507.5 298.5Z" fill="#4b0082"/>
<path d="M511 299.5H516L513.5 302.5Z" fill="#4b0082"/>
<path d="M517 300.5H522L519.5 303.5Z" fill="#4b0082"/>
<path d="M523 302.5H528L525.5 305.5Z" fill="#4b0082"/>
<path d="M529 303.5H534L531.5 306.5Z" fill="#4b0082"/>
<path d="M535 303.5H540L537.5 306.5Z" fill="#4b0082"/>
<path d="M541 304.5H546L543.5 307.5Z" fill="#4b0082"/>
<path d="M1129 491.5H1134L1131.5 494.5Z" fill="#4b0082"/>
<path d="M1135 491.5H1140L1137.5 494.5Z" fill="#4b0082"/>
<path d="M1141 491.5H1146L1143.5 494.5Z" fill="#4b0082"/>
<path d="M1243 475.5H1248L1245.5 478.5Z" fill="#4b0082"/>
<path d="M1249 475.5H1254L1251.5 478.5Z" fill="#4b0082"/>
<path d="M1255 482.5H1260L1257.5 485.5Z" fill="#4b0082"/>
<path d="M1261 500.5H1266L1263.5 503.5Z" fill="#4b0082"/>
<path d="M1267 523.5H1272L1269.5 526.5Z" fill="#4b0082"/>
<path d="M1273 549.5H1278L1275.5 552.5Z" fill="#4b0082"/>
<path d="M1279 570.5H1284L1281.5 573.5Z" fill="#4b0082"/>
<path d="M1285 587.5H1290L1287.5 590.5Z" fill="#4b0082"/>
<path d="M1291 600.5H1296L1293.5 603.5Z" fill="#4b0082"/>
<path d="M1297 607.5H1302L1299.5 610.5Z" fill="#4b0082"/>
<path d="M1303 611.5H1308L1305.5 614.5Z" fill="#4b0082"/>
<path d="M1309 611.5H1314L1311.5 614.5Z" fill="#4b0082"/>
<path d="M1315 611.5H1320L1317.5 614.5Z" fill="#4b0082"/>
<path d="M1321 611.5H1326L1323.5 614.5Z" fill="#4b0082"/>
<path d="M1447 567.5H1452L1449.5 570.5Z" fill="#4b0082"/>
<path d="M1453 574.5H1458L1455.5 577.5Z" fill="#4b0082"/>
<path d="M1459 579.5H1464L1461.5 582.5Z" fill="#4b0082"/>
<path d="M1465 583.5H1470L1467.5 586.5Z" fill="#4b0082"/>
<path d="M247 383.5H252L249.5 386.5Z" fill="#4b0082"/>
<path d="M253 383.5H258L255.5 386.5Z" fill="#4b0082"/>
<path d="M259 383.5H264L261.5 386.5Z" fill="#4b0082"/>
<path d="M265 383.5H270L267.5 386.5Z" fill="#4b0082"/>
<path d="M271 383.5H276L273.5 386.5Z" fill="#4b0082"/>
<path d="M277 383.5H282L279.5 386.5Z" fill="#4b0082"/>
<path d="M283 383.5H288L285.5 386.5Z" fill="#4b0082"/>
<path d="M289 383.5H294L291.5 386.5Z" fill="#4b0082"/>
<path d="M295 383.5H300L297.5 386.5Z" fill="#4b0082"/>
<path d="M301 383.5H306L303.5 386.5Z" fill="#4b0082"/>
<path d="M307 383.5H312L309.5 386.5Z" fill="#4b0082"/>
<path d="M313 383.5H318L315.5 386.5Z" fill="#4b0082"/>
<path d="M319 383.5H324L321.5 386.5Z" fill="#4b0082"/>
<path d="M21.5 183V200" stroke="#000"/>
<rect x="19.5" y="188.5" width="4" height="11" fill="#00ffff" stroke="#000"/>
<path d="M27.5 172V189" stroke="#000"/>
<rect x="25.5" y="184.5" width="4" height="4" fill="#00ffff" stroke="#000"/>
<path d="M33.5 172V184" stroke="#000"/>
<path d="M31 183.5H36" stroke="#000"/>
<path d="M39.5 177V189" stroke="#000"/>
<rect x="37.5" y="184.5" width="4" height="4" fill="#00ffff" stroke="#000"/>
<path d="M45.5 166V194" stroke="#000"/>
<rect x="43.5" y="178.5" width="4" height="10" fill="#00ffff" stroke="#000"/>
<path d="M51.5 172V201" stroke="#000"/>
<rect x="49.5" y="178.5" width="4" height="16" fill="#00ffff" stroke="#000"/>
<path d="M57.5 161V222" stroke="#000"/>
<rect x="55.5" y="172.5" width="4" height="22" fill="#00ffff" stroke="#000"/>
<path d="M63.5 112V179" stroke="#000"/>
<rect x="61.5" y="124.5" width="4" height="48" fill="#00ffff" stroke="#000"/>
<path d="M69.5 112V156" stroke="#000"/>
<path d="M67 123.5H72" stroke="#000"/>
<path d="M75.5 95V135" stroke="#000"/>
<path d="M73 123.5H78" stroke="#000"/>
<path d="M81.5 117V152" stroke="#000"/>
<rect x="79.5" y="124.5" width="4" height="20" fill="#00ffff" stroke="#000"/>
<path d="M87.5 134V155" stroke="#000"/>
<rect x="85.5" y="134.5" width="4" height="10" fill="#00ffff" stroke="#000"/>
<path d="M93.5 117V179" stroke="#000"/>
<rect x="91.5" y="134.5" width="4" height="21" fill="#00ffff" stroke="#000"/>
<path d="M99.5 145V162" stroke="#000"/>
<path d="M97 155.5H102" stroke="#000"/>
<path d="M105.5 145V184" stroke="#000"/>
<path d="M103 155.5H108" stroke="#000"/>
<path d="M111.5 140V156" stroke="#000"/>
<rect x="109.5" y="144.5" width="4" height="11" fill="#00ffff" stroke="#000"/>
<path d="M117.5 140V168" stroke="#000"/>
<rect x="115.5" y="144.5" width="4" height="17" fill="#00ffff" stroke="#000"/>
<path d="M123.5 161V174" stroke="#000"/>
<rect x="121.5" y="161.5" width="4" height="5" fill="#00ffff" stroke="#000"/>
<path d="M129.5 161V222" stroke="#000"/>
<rect x="127.5" y="166.5" width="4" height="22" fill="#4b0082" stroke="#000"/>
<path d="M135.5 183V201" stroke="#000"/>
<rect x="133.5" y="188.5" width="4" height="6" fill="#4b0082" stroke="#000"/>
<path d="M141.5 188V217" stroke="#000"/>
<rect x="139.5" y="194.5" width="4" height="11" fill="#4b0082" stroke="#000"/>
<path d="M147.5 200V211" stroke="#000"/>
<rect x="145.5" y="200.5" width="4" height="5" fill="#4b0082" stroke="#000"/>
<path d="M153.5 200V267" stroke="#000"/>
<rect x="151.5" y="200.5" width="4" height="48" fill="#4b0082" stroke="#000"/>
<path d="M159.5 243V338" stroke="#000"/>
<rect x="157.5" y="248.5" width="4" height="72" fill="#4b0082" stroke="#000"/>
<path d="M165.5 314V382" stroke="#000"/>
<rect x="163.5" y="320.5" width="4" height="32" fill="#4b0082" stroke="#000"/>
<path d="M171.5 331V365" stroke="#000"/>
<rect x="169.5" y="347.5" width="4" height="5" fill="#4b0082" stroke="#000"/>
<path d="M177.5 331V359" stroke="#000"/>
<rect x="175.5" y="341.5" width="4" height="6" fill="#4b0082" stroke="#000"/>
<path d="M183.5 331V359" stroke="#000"/>
<rect x="181.5" y="336.5" width="4" height="5" fill="#4b0082" stroke="#000"/>
<path d="M189.5 331V353" stroke="#000"/>
<rect x="187.5" y="336.5" width="4" height="16" fill="#4b0082" stroke="#000"/>
<path d="M195.5 336V371" stroke="#000"/>
<rect x="193.5" y="352.5" width="4" height="6" fill="#4b0082" stroke="#000"/>
<path d="M201.5 352V414" stroke="#000"/>
<rect x="199.5" y="358.5" width="4" height="55" fill="#4b0082" stroke="#000"/>
<path d="M207.5 401V446" stroke="#000"/>
<rect x="205.5" y="413.5" width="4" height="22" fill="#4b0082" stroke="#000"/>
<path d="M213.5 391V442" stroke="#000"/>
<rect x="211.5" y="435.5" width="4" height="6" fill="#4b0082" stroke="#000"/>
<path d="M219.5 435V469" stroke="#000"/>
<rect x="217.5" y="441.5" width="4" height="10" fill="#4b0082" stroke="#000"/>
<path d="M225.5 424V486" stroke="#000"/>
<rect x="223.5" y="429.5" width="4" height="22" fill="#4b0082" stroke="#000"/>
<path d="M231.5 418V452" stroke="#000"/>
<rect x="229.5" y="429.5" width="4" height="12" fill="#4b0082" stroke="#000"/>
<path d="M237.5 413V442" stroke="#000"/>
<rect x="235.5" y="418.5" width="4" height="23" fill="#4b0082" stroke="#000"/>
<path d="M243.5 396V419" stroke="#000"/>
<rect x="241.5" y="407.5" width="4" height="11" fill="#4b0082" stroke="#000"/>
<path d="M249.5 384V408" stroke="#000"/>
<rect x="247.5" y="396.5" width="4" height="11" fill="#4b0082" stroke="#000"/>
<path d="M255.5 396V436" stroke="#000"/>
<rect x="253.5" y="396.5" width="4" height="22" fill="#4b0082" stroke="#000"/>
<path d="M261.5 413V436" stroke="#000"/>
<rect x="259.5" y="418.5" width="4" height="6" fill="#4b0082" stroke="#000"/>
<path d="M267.5 418V464" stroke="#000"/>
<rect x="265.5" y="418.5" width="4" height="38" fill="#4b0082" stroke="#000"/>
<path d="M273.5 441V464" stroke="#000"/>
<rect x="271.5" y="451.5" width="4" height="5" fill="#4b0082" stroke="#000"/>
<path d="M279.5 429V463" stroke="#000"/>
<rect x="277.5" y="451.5" width="4" height="11" fill="#4b0082" stroke="#000"/>
<path d="M285.5 369V469" stroke="#000"/>
<rect x="283.5" y="402.5" width="4" height="60" fill="#4b0082" stroke="#000"/>
<path d="M291.5 391V419" stroke="#000"/>
<rect x="289.5" y="402.5" width="4" height="16" fill="#4b0082" stroke="#000"/>
<path d="M297.5 418V446" stroke="#000"/>
<rect x="295.5" y="418.5" width="4" height="23" fill="#4b0082" stroke="#000"/>
<path d="M303.5 424V446" stroke="#000"/>
<rect x="301.5" y="424.5" width="4" height="17" fill="#4b0082" stroke="#000"/>
<path d="M309.5 424V583" stroke="#000"/>
<rect x="307.5" y="424.5" width="4" height="65" fill="#4b0082" stroke="#000"/>
<path d="M315.5 462V497" stroke="#000"/>
<rect x="313.5" y="468.5" width="4" height="21" fill="#4b0082" stroke="#000"/>
<path d="M321.5 402V469" stroke="#000"/>
<rect x="319.5" y="424.5" width="4" height="44" fill="#4b0082" stroke="#000"/>
<path d="M327.5 391V442" stroke="#000"/>
<rect x="325.5" y="396.5" width="4" height="28" fill="#4b0082" stroke="#000"/>
<path d="M333.5 380V474" stroke="#000"/>
<rect x="331.5" y="396.5" width="4" height="11" fill="#4b0082" stroke="#000"/>
<path d="M339.5 391V414" stroke="#000"/>
<rect x="337.5" y="396.5" width="4" height="11" fill="#4b0082" stroke="#000"/>
<path d="M345.5 298V397" stroke="#000"/>
<rect x="343.5" y="310.5" width="4" height="86" fill="#00ffff" stroke="#000"/>
<path d="M351.5 303V342" stroke="#000"/>
<rect x="349.5" y="310.5" width="4" height="26" fill="#00ffff" stroke="#000"/>
<path d="M357.5 331V364" stroke="#000"/>
<rect x="355.5" y="337.5" width="4" height="21" fill="#00ffff" stroke="#000"/>
<path d="M363.5 303V353" stroke="#000"/>
<rect x="361.5" y="310.5" width="4" height="42" fill="#00ffff" stroke="#000"/>
<path d="M369.5 304V326" stroke="#000"/>
<rect x="367.5" y="304.5" width="4" height="6" fill="#00ffff" stroke="#000"/>
<path d="M375.5 292V311" stroke="#000"/>
<rect x="373.5" y="299.5" width="4" height="5" fill="#00ffff" stroke="#000"/>
<path d="M381.5 293V300" stroke="#000"/>
<rect x="379.5" y="293.5" width="4" height="6" fill="#00ffff" stroke="#000"/>
<path d="M387.5 293V311" stroke="#000"/>
<rect x="385.5" y="293.5" width="4" height="11" fill="#00ffff" stroke="#000"/>
<path d="M393.5 288V305" stroke="#000"/>
<rect x="391.5" y="299.5" width="4" height="5" fill="#00ffff" stroke="#000"/>
<path d="M399.5 288V304" stroke="#000"/>
<path d="M397 299.5H402" stroke="#000"/>
<path d="M405.5 293V304" stroke="#000"/>
<rect x="403.5" y="293.5" width="4" height="6" fill="#00ffff" stroke="#000"/>
<path d="M411.5 293V300" stroke="#000"/>
<path d="M409 299.5H414" stroke="#000"/>
<path d="M417.5 293V300" stroke="#000"/>
<path d="M415 299.5H420" stroke="#000"/>
<path d="M423.5 299V305" stroke="#000"/>
<path d="M421 299.5H426" stroke="#000"/>
<path d="M429.5 296V302" stroke="#000"/>
<path d="M427 299.5H432" stroke="#000"/>
<path d="M435.5 293V300" stroke="#000"/>
<path d="M433 299.5H438" stroke="#000"/>
<path d="M441.5 299V305" stroke="#000"/>
<path d="M439 299.5H444" stroke="#000"/>
<path d="M447.5 288V300" stroke="#000"/>
<rect x="445.5" y="293.5" width="4" height="6" fill="#00ffff" stroke="#000"/>
<path d="M453.5 293V300" stroke="#000"/>
<rect x="451.5" y="293.5" width="4" height="6" fill="#00ffff" stroke="#000"/>
<path d="M459.5 293V311" stroke="#000"/>
<rect x="457.5" y="299.5" width="4" height="11" fill="#00ffff" stroke="#000"/>
<path d="M465.5 304V321" stroke="#000"/>
<rect x="463.5" y="304.5" width="4" height="16" fill="#00ffff" stroke="#000"/>
<path d="M471.5 315V332" stroke="#000"/>
<rect x="469.5" y="315.5" width="4" height="5" fill="#00ffff" stroke="#000"/>
<path d="M477.5 304V337" stroke="#000"/>
<rect x="475.5" y="320.5" width="4" height="11" fill="#4b0082" stroke="#000"/>
<path d="M483.5 320V337" stroke="#000"/>
<rect x="481.5" y="326.5" width="4" height="5" fill="#4b0082" stroke="#000"/>
<path d="M489.5 315V332" stroke="#000"/>
<rect x="487.5" y="315.5" width="4" height="10" fill="#4b0082" stroke="#000"/>
<path d="M495.5 315V337" stroke="#000"/>
<rect x="493.5" y="320.5" width="4" height="16" fill="#4b0082" stroke="#000"/>
<path d="M501.5 332V342" stroke="#000"/>
<rect x="499.5" y="332.5" width="4" height="4" fill="#4b0082" stroke="#000"/>
<path d="M507.5 332V342" stroke="#000"/>
<rect x="505.5" y="332.5" width="4" height="9" fill="#4b0082" stroke="#000"/>
<path d="M513.5 332V342" stroke="#000"/>
<rect x="511.5" y="332.5" width="4" height="9" fill="#4b0082" stroke="#000"/>
<path d="M519.5 310V349" stroke="#000"/>
<path d="M517 332.5H522" stroke="#000"/>
<path d="M525.5 320V332" stroke="#000"/>
<rect x="523.5" y="320.5" width="4" height="6" fill="#4b0082" stroke="#000"/>
<path d="M531.5 320V342" stroke="#000"/>
<rect x="529.5" y="320.5" width="4" height="16" fill="#4b0082" stroke="#000"/>
<path d="M537.5 337V370" stroke="#000"/>
<rect x="535.5" y="337.5" width="4" height="21" fill="#4b0082" stroke="#000"/>
<path d="M543.5 348V370" stroke="#000"/>
<rect x="541.5" y="358.5" width="4" height="11" fill="#4b0082" stroke="#000"/>
<path d="M1131.5 500V507" stroke="#000"/>
<path d="M1129 506.5H1134" stroke="#000"/>
<path d="M1137.5 507V519" stroke="#000"/>
<rect x="1135.5" y="507.5" width="4" height="4" fill="#4b0082" stroke="#000"/>
<path d="M1143.5 511V524" stroke="#000"/>
<rect x="1141.5" y="511.5" width="4" height="12" fill="#4b0082" stroke="#000"/>
<path d="M1149.5 489V518" stroke="#000"/>
<rect x="1147.5" y="489.5" width="4" height="28" fill="#00ffff" stroke="#000"/>
<path d="M1155.5 478V501" stroke="#000"/>
<rect x="1153.5" y="489.5" width="4" height="11" fill="#00ffff" stroke="#000"/>
<path d="M1161.5 501V512" stroke="#000"/>
<rect x="1159.5" y="501.5" width="4" height="10" fill="#00ffff" stroke="#000"/>
<path d="M1167.5 495V519" stroke="#000"/>
<rect x="1165.5" y="495.5" width="4" height="16" fill="#00ffff" stroke="#000"/>
<path d="M1173.5 484V501" stroke="#000"/>
<rect x="1171.5" y="489.5" width="4" height="6" fill="#00ffff" stroke="#000"/>
<path d="M1179.5 489V524" stroke="#000"/>
<rect x="1177.5" y="489.5" width="4" height="22" fill="#00ffff" stroke="#000"/>
<path d="M1185.5 511V530" stroke="#000"/>
<rect x="1183.5" y="511.5" width="4" height="6" fill="#00ffff" stroke="#000"/>
<path d="M1191.5 506V518" stroke="#000"/>
<path d="M1189 517.5H1194" stroke="#000"/>
<path d="M1197.5 484V524" stroke="#000"/>
<rect x="1195.5" y="506.5" width="4" height="11" fill="#00ffff" stroke="#000"/>
<path d="M1203.5 495V524" stroke="#000"/>
<rect x="1201.5" y="500.5" width="4" height="11" fill="#00ffff" stroke="#000"/>
<path d="M1209.5 489V519" stroke="#000"/>
<rect x="1207.5" y="495.5" width="4" height="5" fill="#00ffff" stroke="#000"/>
<path d="M1215.5 495V519" stroke="#000"/>
<rect x="1213.5" y="495.5" width="4" height="16" fill="#00ffff" stroke="#000"/>
<path d="M1221.5 495V519" stroke="#000"/>
<rect x="1219.5" y="500.5" width="4" height="11" fill="#00ffff" stroke="#000"/>
<path d="M1227.5 489V507" stroke="#000"/>
<path d="M1225 500.5H1230" stroke="#000"/>
<path d="M1233.5 495V512" stroke="#000"/>
<path d="M1231 500.5H1236" stroke="#000"/>
<path d="M1239.5 495V535" stroke="#000"/>
<rect x="1237.5" y="500.5" width="4" height="28" fill="#4b0082" stroke="#000"/>
<path d="M1245.5 522V628" stroke="#000"/>
<rect x="1243.5" y="528.5" width="4" height="66" fill="#4b0082" stroke="#000"/>
<path d="M1251.5 582V634" stroke="#000"/>
<rect x="1249.5" y="594.5" width="4" height="5" fill="#4b0082" stroke="#000"/>
<path d="M1257.5 599V676" stroke="#000"/>
<rect x="1255.5" y="599.5" width="4" height="60" fill="#4b0082" stroke="#000"/>
<path d="M1263.5 621V666" stroke="#000"/>
<path d="M1261 659.5H1266" stroke="#000"/>
<path d="M1269.5 642V676" stroke="#000"/>
<rect x="1267.5" y="648.5" width="4" height="11" fill="#4b0082" stroke="#000"/>
<path d="M1275.5 642V676" stroke="#000"/>
<rect x="1273.5" y="648.5" width="4" height="16" fill="#4b0082" stroke="#000"/>
<path d="M1281.5 642V676" stroke="#000"/>
<rect x="1279.5" y="648.5" width="4" height="16" fill="#4b0082" stroke="#000"/>
<path d="M1287.5 627V660" stroke="#000"/>
<rect x="1285.5" y="648.5" width="4" height="11" fill="#4b0082" stroke="#000"/>
<path d="M1293.5 642V671" stroke="#000"/>
<rect x="1291.5" y="654.5" width="4" height="5" fill="#4b0082" stroke="#000"/>
<path d="M1299.5 648V666" stroke="#000"/>
<path d="M1297 654.5H1302" stroke="#000"/>
<path d="M1305.5 627V660" stroke="#000"/>
<rect x="1303.5" y="648.5" width="4" height="6" fill="#4b0082" stroke="#000"/>
<path d="M1311.5 640V682" stroke="#000"/>
<rect x="1309.5" y="648.5" width="4" height="27" fill="#4b0082" stroke="#000"/>
<path d="M1317.5 627V676" stroke="#000"/>
<rect x="1315.5" y="632.5" width="4" height="43" fill="#4b0082" stroke="#000"/>
<path d="M1323.5 621V649" stroke="#000"/>
<rect x="1321.5" y="626.5" width="4" height="6" fill="#4b0082" stroke="#000"/>
<path d="M1329.5 603V627" stroke="#000"/>
<rect x="1327.5" y="610.5" width="4" height="11" fill="#00ffff" stroke="#000"/>
<path d="M1335.5 578V617" stroke="#000"/>
<rect x="1333.5" y="578.5" width="4" height="32" fill="#00ffff" stroke="#000"/>
<path d="M1341.5 578V617" stroke="#000"/>
<rect x="1339.5" y="578.5" width="4" height="26" fill="#00ffff" stroke="#000"/>
<path d="M1347.5 588V611" stroke="#000"/>
<path d="M1345 604.5H1350" stroke="#000"/>
<path d="M1353.5 593V627" stroke="#000"/>
<rect x="1351.5" y="604.5" width="4" height="12" fill="#00ffff" stroke="#000"/>
<path d="M1359.5 599V627" stroke="#000"/>
<rect x="1357.5" y="604.5" width="4" height="12" fill="#00ffff" stroke="#000"/>
<path d="M1365.5 593V617" stroke="#000"/>
<rect x="1363.5" y="604.5" width="4" height="6" fill="#00ffff" stroke="#000"/>
<path d="M1371.5 604V622" stroke="#000"/>
<rect x="1369.5" y="610.5" width="4" height="6" fill="#00ffff" stroke="#000"/>
<path d="M1377.5 599V622" stroke="#000"/>
<rect x="1375.5" y="604.5" width="4" height="12" fill="#00ffff" stroke="#000"/>
<path d="M1383.5 582V611" stroke="#000"/>
<rect x="1381.5" y="593.5" width="4" height="11" fill="#00ffff" stroke="#000"/>
<path d="M1389.5 566V611" stroke="#000"/>
<rect x="1387.5" y="566.5" width="4" height="27" fill="#00ffff" stroke="#000"/>
<path d="M1395.5 533V594" stroke="#000"/>
<rect x="1393.5" y="566.5" width="4" height="12" fill="#00ffff" stroke="#000"/>
<path d="M1401.5 571V605" stroke="#000"/>
<rect x="1399.5" y="578.5" width="4" height="21" fill="#00ffff" stroke="#000"/>
<path d="M1407.5 578V600" stroke="#000"/>
<rect x="1405.5" y="593.5" width="4" height="6" fill="#00ffff" stroke="#000"/>
<path d="M1413.5 582V617" stroke="#000"/>
<rect x="1411.5" y="582.5" width="4" height="11" fill="#00ffff" stroke="#000"/>
<path d="M1419.5 578V605" stroke="#000"/>
<rect x="1417.5" y="582.5" width="4" height="11" fill="#00ffff" stroke="#000"/>
<path d="M1425.5 588V632" stroke="#000"/>
<rect x="1423.5" y="593.5" width="4" height="23" fill="#00ffff" stroke="#000"/>
<path d="M1431.5 604V627" stroke="#000"/>
<rect x="1429.5" y="616.5" width="4" height="5" fill="#00ffff" stroke="#000"/>
<path d="M1437.5 610V632" stroke="#000"/>
<rect x="1435.5" y="616.5" width="4" height="5" fill="#00ffff" stroke="#000"/>
<path d="M1443.5 616V632" stroke="#000"/>
<rect x="1441.5" y="616.5" width="4" height="10" fill="#00ffff" stroke="#000"/>
<path d="M1449.5 621V638" stroke="#000"/>
<rect x="1447.5" y="626.5" width="4" height="6" fill="#4b0082" stroke="#000"/>
<path d="M1455.5 616V633" stroke="#000"/>
<rect x="1453.5" y="616.5" width="4" height="16" fill="#4b0082" stroke="#000"/>
<path d="M1461.5 610V627" stroke="#000"/>
<path d="M1459 615.5H1464" stroke="#000"/>
<path d="M1467.5 604V616" stroke="#000"/>
<rect x="1465.5" y="610.5" width="4" height="5" fill="#4b0082" stroke="#000"/>
<path d="M1473.5 600V622" stroke="#000"/>
<rect x="1471.5" y="604.5" width="4" height="6" fill="#4b0082" stroke="#000"/>
<path d="M1479.5 582V616" stroke="#000"/>
<rect x="1477.5" y="589.5" width="4" height="21" fill="#00ffff" stroke="#000"/>
<path d="M1485.5 589V605" stroke="#000"/>
<rect x="1483.5" y="589.5" width="4" height="15" fill="#00ffff" stroke="#000"/>
<path d="M1491.5 593V600" stroke="#000"/>
<path d="M1489 599.5H1494" stroke="#000"/>
<path d="M1497.5 588V600" stroke="#000"/>
<rect x="1495.5" y="593.5" width="4" height="6" fill="#00ffff" stroke="#000"/>
<path d="M1503.5 588V600" stroke="#000"/>
<path d="M1501 593.5H1506" stroke="#000"/>
<path d="M1509.5 588V600" stroke="#000"/>
<rect x="1507.5" y="593.5" width="4" height="6" fill="#00ffff" stroke="#000"/>
<path d="M1515.5 589V600" stroke="#000"/>
<rect x="1513.5" y="589.5" width="4" height="10" fill="#00ffff" stroke="#000"/>
<path d="M1521.5 582V605" stroke="#000"/>
<rect x="1519.5" y="589.5" width="4" height="10" fill="#00ffff" stroke="#000"/>
<path d="M1527.5 604V616" stroke="#000"/>
<path d="M1525 610.5H1530" stroke="#000"/>
<path d="M1533.5 599V622" stroke="#000"/>
<rect x="1531.5" y="604.5" width="4" height="11" fill="#00ffff" stroke="#000"/>
<path d="M1539.5 615V622" stroke="#000"/>
<rect x="1537.5" y="615.5" width="4" height="6" fill="#00ffff" stroke="#000"/>
<path d="M1545.5 593V633" stroke="#000"/>
<rect x="1543.5" y="615.5" width="4" height="6" fill="#00ffff" stroke="#000"/>
<path d="M1551.5 582V628" stroke="#000"/>
<rect x="1549.5" y="610.5" width="4" height="5" fill="#00ffff" stroke="#000"/>
<rect x="54.5" y="234.5" width="6" height="6" fill="#ffff00" stroke="#d8d8d8"/>
<rect x="108.5" y="180.5" width="6" height="6" fill="#ffff00" stroke="#d8d8d8"/>
<rect x="252.5" y="366.5" width="6" height="6" fill="#ffff00" stroke="#d8d8d8"/>
<rect x="288.5" y="360.5" width="6" height="6" fill="#ffff00" stroke="#d8d8d8"/>
<rect x="330.5" y="349.5" width="6" height="6" fill="#ffff00" stroke="#d8d8d8"/>
<rect x="1236.5" y="475.5" width="6" height="6" fill="#ffff00" stroke="#d8d8d8"/>
<rect x="1164.5" y="530.5" width="6" height="6" fill="#ffff00" stroke="#d8d8d8"/>
<rect x="1194.5" y="536.5" width="6" height="6" fill="#ffff00" stroke="#d8d8d8"/>
<rect x="1200.5" y="536.5" width="6" height="6" fill="#ffff00" stroke="#d8d8d8"/>
<rect x="1206.5" y="530.5" width="6" height="6" fill="#ffff00" stroke="#d8d8d8"/>
<rect x="1218.5" y="530.5" width="6" height="6" fill="#ffff00" stroke="#d8d8d8"/>
<rect x="1284.5" y="607.5" width="6" height="6" fill="#ffff00" stroke="#d8d8d8"/>
<rect x="1308.5" y="623.5" width="6" height="6" fill="#ffff00" stroke="#d8d8d8"/>
<rect x="1356.5" y="639.5" width="6" height="6" fill="#ffff00" stroke="#d8d8d8"/>
<rect x="1374.5" y="634.5" width="6" height="6" fill="#ffff00" stroke="#d8d8d8"/>
<rect x="1380.5" y="623.5" width="6" height="6" fill="#ffff00" stroke="#d8d8d8"/>
<rect x="1410.5" y="629.5" width="6" height="6" fill="#ffff00" stroke="#d8d8d8"/>
<rect x="1434.5" y="656.5" width="6" height="6" fill="#ffff00" stroke="#d8d8d8"/>
<rect x="1470.5" y="574.5" width="6" height="6" fill="#ffff00" stroke="#d8d8d8"/>
<rect x="1542.5" y="656.5" width="6" height="6" fill="#ffff00" stroke="#d8d8d8"/>
<path d="M57.5 222.5L62.5 227.5L57.5 232.5L52.5 227.5Z" fill="#00ff00" stroke="#d0d0d0"/>
<path d="M1413.5 616.2L1418.5 621.2L1413.5 626.2L1408.5 621.2Z" fill="#00ff00" stroke="#d0d0d0"/>
<path d="M1239.5 484.4L1244.5 489.4L1239.5 494.4L1234.5 489.4Z" fill="#ff0000" stroke="#d0d0d0"/>
<path d="M1287.5 616.8L1292.5 621.8L1287.5 626.8L1282.5 621.8Z" fill="#ff0000" stroke="#d0d0d0"/>
<path d="M1311.5 632.6L1316.5 637.6L1311.5 642.6L1306.5 637.6Z" fill="#ff0000" stroke="#d0d0d0"/>
<path d="M111.5 161L116.5 167H113.5V180H109.5V167H106.5Z" fill="#00ff00" stroke="#d8d8d8" stroke-width="1"/>
<path d="M255.5 391L260.5 385H257.5V373H253.5V385H250.5Z" fill="#ff0000" stroke="#d8d8d8" stroke-width="1"/>
<path d="M291.5 386L296.5 380H293.5V366H289.5V380H286.5Z" fill="#ff0000" stroke="#d8d8d8" stroke-width="1"/>
<path d="M333.5 375L338.5 369H335.5V355H331.5V369H328.5Z" fill="#ff0000" stroke="#d8d8d8" stroke-width="1"/>
<path d="M1473.5 599L1478.5 593H1475.5V581H1471.5V593H1468.5Z" fill="#ff0000" stroke="#d8d8d8" stroke-width="1"/>
<path d="M1595 603L1601 597H1636V609H1601Z" fill="#4b0082" stroke="#d3d3d3" stroke-width=".6"/><text x="1603" y="607" font-size="11" fill="#fff" font-family="Liberation Sans">1,3629</text>
<path d="M1595 610L1601 604H1636V616H1601Z" fill="#000" stroke="#d3d3d3" stroke-width=".6"/><text x="1603" y="614" font-size="11" fill="#fff" font-family="Liberation Sans">1,3628</text>
<path d="M1594 622L1600 616H1636V627H1600Z" fill="#00ffff" stroke="#d3d3d3" stroke-width=".6"/><text x="1603" y="626" font-size="11" fill="#000" font-family="Liberation Sans">1,3626</text>
<rect x="19" y="785" width="5" height="5" fill="#00ff00"/>
<rect x="25" y="781" width="5" height="9" fill="#00ff00"/>
<rect x="31" y="778" width="5" height="12" fill="#00ff00"/>
<rect x="37" y="776" width="5" height="14" fill="#00ff00"/>
<rect x="43" y="776" width="5" height="14" fill="#00ff00"/>
<rect x="49" y="776" width="5" height="14" fill="#006400"/>
<rect x="55" y="777" width="5" height="13" fill="#006400"/>
<rect x="61" y="770" width="5" height="20" fill="#00ff00"/>
<rect x="67" y="762" width="5" height="28" fill="#00ff00"/>
<rect x="73" y="755" width="5" height="35" fill="#00ff00"/>
<rect x="79" y="753" width="5" height="37" fill="#00ff00"/>
<rect x="85" y="754" width="5" height="36" fill="#006400"/>
<rect x="91" y="758" width="5" height="32" fill="#006400"/>
<rect x="97" y="762" width="5" height="28" fill="#006400"/>
<rect x="103" y="767" width="5" height="23" fill="#006400"/>
<rect x="109" y="768" width="5" height="22" fill="#006400"/>
<rect x="115" y="770" width="5" height="20" fill="#006400"/>
<rect x="121" y="774" width="5" height="16" fill="#006400"/>
<rect x="127" y="782" width="5" height="8" fill="#006400"/>
<rect x="139" y="790" width="5" height="5" fill="#ff0000"/>
<rect x="145" y="790" width="5" height="10" fill="#ff0000"/>
<rect x="151" y="790" width="5" height="19" fill="#ff0000"/>
<rect x="157" y="790" width="5" height="36" fill="#ff0000"/>
<rect x="163" y="790" width="5" height="57" fill="#ff0000"/>
<rect x="169" y="790" width="5" height="75" fill="#ff0000"/>
<rect x="175" y="790" width="5" height="84" fill="#ff0000"/>
<rect x="181" y="790" width="5" height="88" fill="#ff0000"/>
<rect x="187" y="790" width="5" height="88" fill="#ff0000"/>
<rect x="193" y="790" width="5" height="89" fill="#ff0000"/>
<rect x="199" y="790" width="5" height="94" fill="#ff0000"/>
<rect x="205" y="790" width="5" height="103" fill="#ff0000"/>
<rect x="211" y="790" width="5" height="108" fill="#ff0000"/>
<rect x="217" y="790" width="5" height="114" fill="#ff0000"/>
<rect x="223" y="790" width="5" height="116" fill="#ff0000"/>
<rect x="229" y="790" width="5" height="114" fill="#800000"/>
<rect x="235" y="790" width="5" height="107" fill="#800000"/>
<rect x="241" y="790" width="5" height="97" fill="#800000"/>
<rect x="247" y="790" width="5" height="86" fill="#800000"/>
<rect x="253" y="790" width="5" height="79" fill="#800000"/>
<rect x="259" y="790" width="5" height="75" fill="#800000"/>
<rect x="265" y="790" width="5" height="75" fill="#800000"/>
<rect x="271" y="790" width="5" height="75" fill="#ff0000"/>
<rect x="277" y="790" width="5" height="75" fill="#800000"/>
<rect x="283" y="790" width="5" height="66" fill="#800000"/>
<rect x="289" y="790" width="5" height="56" fill="#800000"/>
<rect x="295" y="790" width="5" height="52" fill="#800000"/>
<rect x="301" y="790" width="5" height="49" fill="#800000"/>
<rect x="307" y="790" width="5" height="56" fill="#ff0000"/>
<rect x="313" y="790" width="5" height="60" fill="#ff0000"/>
<rect x="319" y="790" width="5" height="54" fill="#800000"/>
<rect x="325" y="790" width="5" height="42" fill="#800000"/>
<rect x="331" y="790" width="5" height="33" fill="#800000"/>
<rect x="337" y="790" width="5" height="23" fill="#800000"/>
<rect x="343" y="790" width="5" height="6" fill="#800000"/>
<rect x="349" y="778" width="5" height="12" fill="#00ff00"/>
<rect x="355" y="770" width="5" height="20" fill="#00ff00"/>
<rect x="361" y="761" width="5" height="29" fill="#00ff00"/>
<rect x="367" y="753" width="5" height="37" fill="#00ff00"/>
<rect x="373" y="746" width="5" height="44" fill="#00ff00"/>
<rect x="379" y="740" width="5" height="50" fill="#00ff00"/>
<rect x="385" y="738" width="5" height="52" fill="#00ff00"/>
<rect x="391" y="738" width="5" height="52" fill="#00ff00"/>
<rect x="397" y="738" width="5" height="52" fill="#006400"/>
<rect x="403" y="739" width="5" height="51" fill="#006400"/>
<rect x="409" y="741" width="5" height="49" fill="#006400"/>
<rect x="415" y="743" width="5" height="47" fill="#006400"/>
<rect x="421" y="746" width="5" height="44" fill="#006400"/>
<rect x="427" y="748" width="5" height="42" fill="#006400"/>
<rect x="433" y="750" width="5" height="40" fill="#006400"/>
<rect x="439" y="753" width="5" height="37" fill="#006400"/>
<rect x="445" y="755" width="5" height="35" fill="#006400"/>
<rect x="451" y="757" width="5" height="33" fill="#006400"/>
<rect x="457" y="760" width="5" height="30" fill="#006400"/>
<rect x="463" y="765" width="5" height="25" fill="#006400"/>
<rect x="469" y="771" width="5" height="19" fill="#006400"/>
<rect x="475" y="776" width="5" height="14" fill="#006400"/>
<rect x="481" y="781" width="5" height="9" fill="#006400"/>
<rect x="487" y="783" width="5" height="7" fill="#006400"/>
<rect x="493" y="786" width="5" height="4" fill="#006400"/>
<rect x="511" y="790" width="5" height="4" fill="#ff0000"/>
<rect x="517" y="790" width="5" height="4" fill="#ff0000"/>
<rect x="529" y="790" width="5" height="3" fill="#ff0000"/>
<rect x="535" y="790" width="5" height="7" fill="#ff0000"/>
<rect x="541" y="790" width="5" height="13" fill="#ff0000"/>
<rect x="547" y="790" width="5" height="17" fill="#ff0000"/>
<rect x="553" y="790" width="5" height="18" fill="#ff0000"/>
<rect x="559" y="790" width="5" height="18" fill="#ff0000"/>
<rect x="565" y="790" width="5" height="20" fill="#ff0000"/>
<rect x="571" y="790" width="5" height="21" fill="#ff0000"/>
<rect x="577" y="790" width="5" height="22" fill="#ff0000"/>
<rect x="583" y="790" width="5" height="23" fill="#ff0000"/>
<rect x="589" y="790" width="5" height="23" fill="#ff0000"/>
<rect x="595" y="790" width="5" height="22" fill="#800000"/>
<rect x="601" y="790" width="5" height="20" fill="#800000"/>
<rect x="607" y="790" width="5" height="19" fill="#800000"/>
<rect x="613" y="790" width="5" height="24" fill="#ff0000"/>
<rect x="619" y="790" width="5" height="28" fill="#ff0000"/>
<rect x="625" y="790" width="5" height="29" fill="#ff0000"/>
<rect x="631" y="790" width="5" height="27" fill="#800000"/>
<rect x="637" y="790" width="5" height="21" fill="#800000"/>
<rect x="643" y="790" width="5" height="24" fill="#ff0000"/>
<rect x="649" y="790" width="5" height="29" fill="#ff0000"/>
<rect x="655" y="790" width="5" height="25" fill="#800000"/>
<rect x="661" y="790" width="5" height="11" fill="#800000"/>
<rect x="679" y="782" width="5" height="8" fill="#00ff00"/>
<rect x="685" y="776" width="5" height="14" fill="#00ff00"/>
<rect x="691" y="772" width="5" height="18" fill="#00ff00"/>
<rect x="697" y="769" width="5" height="21" fill="#00ff00"/>
<rect x="703" y="765" width="5" height="25" fill="#00ff00"/>
<rect x="709" y="764" width="5" height="26" fill="#00ff00"/>
<rect x="715" y="768" width="5" height="22" fill="#006400"/>
<rect x="721" y="770" width="5" height="20" fill="#006400"/>
<rect x="727" y="774" width="5" height="16" fill="#006400"/>
<rect x="733" y="780" width="5" height="10" fill="#006400"/>
<rect x="739" y="786" width="5" height="4" fill="#006400"/>
<rect x="745" y="790" width="5" height="4" fill="#ff0000"/>
<rect x="751" y="790" width="5" height="10" fill="#ff0000"/>
<rect x="757" y="790" width="5" height="13" fill="#ff0000"/>
<rect x="763" y="790" width="5" height="17" fill="#ff0000"/>
<rect x="769" y="790" width="5" height="21" fill="#ff0000"/>
<rect x="775" y="790" width="5" height="25" fill="#ff0000"/>
<rect x="781" y="790" width="5" height="31" fill="#ff0000"/>
<rect x="787" y="790" width="5" height="39" fill="#ff0000"/>
<rect x="793" y="790" width="5" height="49" fill="#ff0000"/>
<rect x="799" y="790" width="5" height="57" fill="#ff0000"/>
<rect x="805" y="790" width="5" height="62" fill="#ff0000"/>
<rect x="811" y="790" width="5" height="62" fill="#800000"/>
<rect x="817" y="790" width="5" height="58" fill="#800000"/>
<rect x="823" y="790" width="5" height="54" fill="#800000"/>
<rect x="829" y="790" width="5" height="49" fill="#800000"/>
<rect x="835" y="790" width="5" height="46" fill="#800000"/>
<rect x="841" y="790" width="5" height="42" fill="#800000"/>
<rect x="847" y="790" width="5" height="43" fill="#ff0000"/>
<rect x="853" y="790" width="5" height="45" fill="#ff0000"/>
<rect x="859" y="790" width="5" height="45" fill="#ff0000"/>
<rect x="865" y="790" width="5" height="44" fill="#800000"/>
<rect x="871" y="790" width="5" height="43" fill="#800000"/>
<rect x="877" y="790" width="5" height="42" fill="#800000"/>
<rect x="883" y="790" width="5" height="41" fill="#800000"/>
<rect x="889" y="790" width="5" height="39" fill="#800000"/>
<rect x="895" y="790" width="5" height="39" fill="#ff0000"/>
<rect x="901" y="790" width="5" height="40" fill="#ff0000"/>
<rect x="907" y="790" width="5" height="40" fill="#800000"/>
<rect x="913" y="790" width="5" height="36" fill="#800000"/>
<rect x="919" y="790" width="5" height="31" fill="#800000"/>
<rect x="925" y="790" width="5" height="27" fill="#800000"/>
<rect x="931" y="790" width="5" height="22" fill="#800000"/>
<rect x="937" y="790" width="5" height="16" fill="#800000"/>
<rect x="943" y="790" width="5" height="12" fill="#800000"/>
<rect x="949" y="790" width="5" height="7" fill="#800000"/>
<rect x="955" y="790" width="5" height="5" fill="#800000"/>
<rect x="961" y="790" width="5" height="5" fill="#800000"/>
<rect x="997" y="785" width="5" height="5" fill="#00ff00"/>
<rect x="1003" y="785" width="5" height="5" fill="#006400"/>
<rect x="1009" y="785" width="5" height="5" fill="#00ff00"/>
<rect x="1015" y="785" width="5" height="5" fill="#00ff00"/>
<rect x="1021" y="785" width="5" height="5" fill="#006400"/>
<rect x="1027" y="786" width="5" height="4" fill="#006400"/>
<rect x="1051" y="790" width="5" height="4" fill="#ff0000"/>
<rect x="1057" y="790" width="5" height="8" fill="#ff0000"/>
<rect x="1063" y="790" width="5" height="12" fill="#ff0000"/>
<rect x="1069" y="790" width="5" height="19" fill="#ff0000"/>
<rect x="1075" y="790" width="5" height="24" fill="#ff0000"/>
<rect x="1081" y="790" width="5" height="25" fill="#ff0000"/>
<rect x="1087" y="790" width="5" height="24" fill="#800000"/>
<rect x="1093" y="790" width="5" height="23" fill="#800000"/>
<rect x="1099" y="790" width="5" height="19" fill="#800000"/>
<rect x="1105" y="790" width="5" height="16" fill="#800000"/>
<rect x="1111" y="790" width="5" height="13" fill="#800000"/>
<rect x="1117" y="790" width="5" height="12" fill="#800000"/>
<rect x="1123" y="790" width="5" height="10" fill="#800000"/>
<rect x="1129" y="790" width="5" height="9" fill="#800000"/>
<rect x="1135" y="790" width="5" height="10" fill="#ff0000"/>
<rect x="1141" y="790" width="5" height="12" fill="#ff0000"/>
<rect x="1147" y="790" width="5" height="11" fill="#800000"/>
<rect x="1153" y="790" width="5" height="7" fill="#800000"/>
<rect x="1159" y="790" width="5" height="7" fill="#800000"/>
<rect x="1165" y="790" width="5" height="6" fill="#800000"/>
<rect x="1171" y="790" width="5" height="4" fill="#800000"/>
<rect x="1177" y="790" width="5" height="4" fill="#ff0000"/>
<rect x="1183" y="790" width="5" height="7" fill="#ff0000"/>
<rect x="1189" y="790" width="5" height="8" fill="#ff0000"/>
<rect x="1195" y="790" width="5" height="7" fill="#800000"/>
<rect x="1201" y="790" width="5" height="6" fill="#800000"/>
<rect x="1207" y="790" width="5" height="4" fill="#800000"/>
<rect x="1213" y="790" width="5" height="3" fill="#800000"/>
<rect x="1219" y="790" width="5" height="3" fill="#800000"/>
<rect x="1237" y="790" width="5" height="3" fill="#ff0000"/>
<rect x="1243" y="790" width="5" height="16" fill="#ff0000"/>
<rect x="1249" y="790" width="5" height="31" fill="#ff0000"/>
<rect x="1255" y="790" width="5" height="49" fill="#ff0000"/>
<rect x="1261" y="790" width="5" height="63" fill="#ff0000"/>
<rect x="1267" y="790" width="5" height="72" fill="#ff0000"/>
<rect x="1273" y="790" width="5" height="77" fill="#ff0000"/>
<rect x="1279" y="790" width="5" height="79" fill="#ff0000"/>
<rect x="1285" y="790" width="5" height="77" fill="#800000"/>
<rect x="1291" y="790" width="5" height="75" fill="#800000"/>
<rect x="1297" y="790" width="5" height="72" fill="#800000"/>
<rect x="1303" y="790" width="5" height="68" fill="#800000"/>
<rect x="1309" y="790" width="5" height="66" fill="#800000"/>
<rect x="1315" y="790" width="5" height="61" fill="#800000"/>
<rect x="1321" y="790" width="5" height="54" fill="#800000"/>
<rect x="1327" y="790" width="5" height="44" fill="#800000"/>
<rect x="1333" y="790" width="5" height="31" fill="#800000"/>
<rect x="1339" y="790" width="5" height="22" fill="#800000"/>
<rect x="1345" y="790" width="5" height="16" fill="#800000"/>
<rect x="1351" y="790" width="5" height="14" fill="#800000"/>
<rect x="1357" y="790" width="5" height="13" fill="#800000"/>
<rect x="1363" y="790" width="5" height="11" fill="#800000"/>
<rect x="1369" y="790" width="5" height="10" fill="#800000"/>
<rect x="1375" y="790" width="5" height="9" fill="#800000"/>
<rect x="1381" y="790" width="5" height="6" fill="#800000"/>
<rect x="1393" y="783" width="5" height="7" fill="#00ff00"/>
<rect x="1399" y="783" width="5" height="7" fill="#00ff00"/>
<rect x="1405" y="783" width="5" height="7" fill="#006400"/>
<rect x="1411" y="783" width="5" height="7" fill="#006400"/>
<rect x="1417" y="783" width="5" height="7" fill="#006400"/>
<rect x="1435" y="790" width="5" height="4" fill="#ff0000"/>
<rect x="1441" y="790" width="5" height="8" fill="#ff0000"/>
<rect x="1447" y="790" width="5" height="11" fill="#ff0000"/>
<rect x="1453" y="790" width="5" height="12" fill="#ff0000"/>
<rect x="1459" y="790" width="5" height="11" fill="#800000"/>
<rect x="1465" y="790" width="5" height="9" fill="#800000"/>
<rect x="1471" y="790" width="5" height="7" fill="#800000"/>
<rect x="1495" y="786" width="5" height="4" fill="#00ff00"/>
<rect x="1501" y="785" width="5" height="5" fill="#00ff00"/>
<rect x="1507" y="784" width="5" height="6" fill="#00ff00"/>
<rect x="1513" y="783" width="5" height="7" fill="#00ff00"/>
<rect x="1519" y="783" width="5" height="7" fill="#006400"/>
<rect x="1525" y="786" width="5" height="4" fill="#006400"/>
<rect x="1549" y="790" width="5" height="3" fill="#ff0000"/>
<path d="M19 788H25V792H19ZM20 787H24V793H20Z" fill="#006400"/>
<path d="M25 788H31V792H25ZM26 787H30V793H26Z" fill="#006400"/>
<path d="M31 788H37V792H31ZM32 787H36V793H32Z" fill="#006400"/>
<path d="M37 788H43V792H37ZM38 787H42V793H38Z" fill="#006400"/>
<path d="M43 788H49V792H43ZM44 787H48V793H44Z" fill="#006400"/>
<path d="M49 788H55V792H49ZM50 787H54V793H50Z" fill="#006400"/>
<path d="M55 788H61V792H55ZM56 787H60V793H56Z" fill="#006400"/>
<path d="M61 788H67V792H61ZM62 787H66V793H62Z" fill="#006400"/>
<path d="M67 788H73V792H67ZM68 787H72V793H68Z" fill="#006400"/>
<path d="M73 788H79V792H73ZM74 787H78V793H74Z" fill="#006400"/>
<path d="M79 788H85V792H79ZM80 787H84V793H80Z" fill="#006400"/>
<path d="M85 788H91V792H85ZM86 787H90V793H86Z" fill="#006400"/>
<path d="M91 788H97V792H91ZM92 787H96V793H92Z" fill="#006400"/>
<path d="M97 788H103V792H97ZM98 787H102V793H98Z" fill="#006400"/>
<path d="M103 788H109V792H103ZM104 787H108V793H104Z" fill="#8b0000"/>
<path d="M109 788H115V792H109ZM110 787H114V793H110Z" fill="#8b0000"/>
<path d="M115 788H121V792H115ZM116 787H120V793H116Z" fill="#8b0000"/>
<path d="M121 788H127V792H121ZM122 787H126V793H122Z" fill="#8b0000"/>
<path d="M127 788H133V792H127ZM128 787H132V793H128Z" fill="#8b0000"/>
<path d="M133 788H139V792H133ZM134 787H138V793H134Z" fill="#8b0000"/>
<path d="M139 788H145V792H139ZM140 787H144V793H140Z" fill="#8b0000"/>
<path d="M145 788H151V792H145ZM146 787H150V793H146Z" fill="#8b0000"/>
<path d="M151 788H157V792H151ZM152 787H156V793H152Z" fill="#8b0000"/>
<path d="M157 788H163V792H157ZM158 787H162V793H158Z" fill="#8b0000"/>
<path d="M163 788H169V792H163ZM164 787H168V793H164Z" fill="#8b0000"/>
<path d="M169 788H175V792H169ZM170 787H174V793H170Z" fill="#8b0000"/>
<path d="M175 788H181V792H175ZM176 787H180V793H176Z" fill="#8b0000"/>
<path d="M181 788H187V792H181ZM182 787H186V793H182Z" fill="#8b0000"/>
<path d="M187 788H193V792H187ZM188 787H192V793H188Z" fill="#8b0000"/>
<path d="M193 788H199V792H193ZM194 787H198V793H194Z" fill="#8b0000"/>
<path d="M199 788H205V792H199ZM200 787H204V793H200Z" fill="#8b0000"/>
<path d="M205 788H211V792H205ZM206 787H210V793H206Z" fill="#8b0000"/>
<path d="M211 788H217V792H211ZM212 787H216V793H212Z" fill="#8b0000"/>
<path d="M217 788H223V792H217ZM218 787H222V793H218Z" fill="#8b0000"/>
<path d="M223 788H229V792H223ZM224 787H228V793H224Z" fill="#8b0000"/>
<path d="M229 788H235V792H229ZM230 787H234V793H230Z" fill="#8b0000"/>
<path d="M235 788H241V792H235ZM236 787H240V793H236Z" fill="#8b0000"/>
<path d="M241 788H247V792H241ZM242 787H246V793H242Z" fill="#8b0000"/>
<path d="M247 788H253V792H247ZM248 787H252V793H248Z" fill="#006400"/>
<path d="M253 788H259V792H253ZM254 787H258V793H254Z" fill="#006400"/>
<path d="M259 788H265V792H259ZM260 787H264V793H260Z" fill="#006400"/>
<path d="M265 788H271V792H265ZM266 787H270V793H266Z" fill="#8b0000"/>
<path d="M271 788H277V792H271ZM272 787H276V793H272Z" fill="#8b0000"/>
<path d="M277 788H283V792H277ZM278 787H282V793H278Z" fill="#8b0000"/>
<path d="M283 788H289V792H283ZM284 787H288V793H284Z" fill="#8b0000"/>
<path d="M289 788H295V792H289ZM290 787H294V793H290Z" fill="#006400"/>
<path d="M295 788H301V792H295ZM296 787H300V793H296Z" fill="#006400"/>
<path d="M301 788H307V792H301ZM302 787H306V793H302Z" fill="#006400"/>
<path d="M307 788H313V792H307ZM308 787H312V793H308Z" fill="#8b0000"/>
<path d="M313 788H319V792H313ZM314 787H318V793H314Z" fill="#8b0000"/>
<path d="M319 788H325V792H319ZM320 787H324V793H320Z" fill="#8b0000"/>
<path d="M325 788H331V792H325ZM326 787H330V793H326Z" fill="#006400"/>
<path d="M331 788H337V792H331ZM332 787H336V793H332Z" fill="#006400"/>
<path d="M337 788H343V792H337ZM338 787H342V793H338Z" fill="#006400"/>
<path d="M343 788H349V792H343ZM344 787H348V793H344Z" fill="#006400"/>
<path d="M349 788H355V792H349ZM350 787H354V793H350Z" fill="#006400"/>
<path d="M355 788H361V792H355ZM356 787H360V793H356Z" fill="#006400"/>
<path d="M361 788H367V792H361ZM362 787H366V793H362Z" fill="#006400"/>
<path d="M367 788H373V792H367ZM368 787H372V793H368Z" fill="#006400"/>
<path d="M373 788H379V792H373ZM374 787H378V793H374Z" fill="#006400"/>
<path d="M379 788H385V792H379ZM380 787H384V793H380Z" fill="#006400"/>
<path d="M385 788H391V792H385ZM386 787H390V793H386Z" fill="#006400"/>
<path d="M391 788H397V792H391ZM392 787H396V793H392Z" fill="#006400"/>
<path d="M397 788H403V792H397ZM398 787H402V793H398Z" fill="#006400"/>
<path d="M403 788H409V792H403ZM404 787H408V793H404Z" fill="#006400"/>
<path d="M409 788H415V792H409ZM410 787H414V793H410Z" fill="#006400"/>
<path d="M415 788H421V792H415ZM416 787H420V793H416Z" fill="#006400"/>
<path d="M421 788H427V792H421ZM422 787H426V793H422Z" fill="#006400"/>
<path d="M427 788H433V792H427ZM428 787H432V793H428Z" fill="#006400"/>
<path d="M433 788H439V792H433ZM434 787H438V793H434Z" fill="#006400"/>
<path d="M439 788H445V792H439ZM440 787H444V793H440Z" fill="#006400"/>
<path d="M445 788H451V792H445ZM446 787H450V793H446Z" fill="#006400"/>
<path d="M451 788H457V792H451ZM452 787H456V793H452Z" fill="#006400"/>
<path d="M457 788H463V792H457ZM458 787H462V793H458Z" fill="#8b0000"/>
<path d="M463 788H469V792H463ZM464 787H468V793H464Z" fill="#8b0000"/>
<path d="M469 788H475V792H469ZM470 787H474V793H470Z" fill="#8b0000"/>
<path d="M475 788H481V792H475ZM476 787H480V793H476Z" fill="#8b0000"/>
<path d="M481 788H487V792H481ZM482 787H486V793H482Z" fill="#8b0000"/>
<path d="M487 788H493V792H487ZM488 787H492V793H488Z" fill="#8b0000"/>
<path d="M493 788H499V792H493ZM494 787H498V793H494Z" fill="#8b0000"/>
<path d="M499 788H505V792H499ZM500 787H504V793H500Z" fill="#8b0000"/>
<path d="M505 788H511V792H505ZM506 787H510V793H506Z" fill="#8b0000"/>
<path d="M511 788H517V792H511ZM512 787H516V793H512Z" fill="#8b0000"/>
<path d="M517 788H523V792H517ZM518 787H522V793H518Z" fill="#8b0000"/>
<path d="M523 788H529V792H523ZM524 787H528V793H524Z" fill="#8b0000"/>
<path d="M529 788H535V792H529ZM530 787H534V793H530Z" fill="#8b0000"/>
<path d="M535 788H541V792H535ZM536 787H540V793H536Z" fill="#8b0000"/>
<path d="M541 788H547V792H541ZM542 787H546V793H542Z" fill="#8b0000"/>
<path d="M547 788H553V792H547ZM548 787H552V793H548Z" fill="#8b0000"/>
<path d="M553 788H559V792H553ZM554 787H558V793H554Z" fill="#8b0000"/>
<path d="M559 788H565V792H559ZM560 787H564V793H560Z" fill="#8b0000"/>
<path d="M565 788H571V792H565ZM566 787H570V793H566Z" fill="#8b0000"/>
<path d="M571 788H577V792H571ZM572 787H576V793H572Z" fill="#8b0000"/>
<path d="M577 788H583V792H577ZM578 787H582V793H578Z" fill="#8b0000"/>
<path d="M583 788H589V792H583ZM584 787H588V793H584Z" fill="#8b0000"/>
<path d="M589 788H595V792H589ZM590 787H594V793H590Z" fill="#8b0000"/>
<path d="M595 788H601V792H595ZM596 787H600V793H596Z" fill="#8b0000"/>
<path d="M601 788H607V792H601ZM602 787H606V793H602Z" fill="#8b0000"/>
<path d="M607 788H613V792H607ZM608 787H612V793H608Z" fill="#8b0000"/>
<path d="M613 788H619V792H613ZM614 787H618V793H614Z" fill="#8b0000"/>
<path d="M619 788H625V792H619ZM620 787H624V793H620Z" fill="#8b0000"/>
<path d="M625 788H631V792H625ZM626 787H630V793H626Z" fill="#8b0000"/>
<path d="M631 788H637V792H631ZM632 787H636V793H632Z" fill="#8b0000"/>
<path d="M637 788H643V792H637ZM638 787H642V793H638Z" fill="#006400"/>
<path d="M643 788H649V792H643ZM644 787H648V793H644Z" fill="#8b0000"/>
<path d="M649 788H655V792H649ZM650 787H654V793H650Z" fill="#8b0000"/>
<path d="M655 788H661V792H655ZM656 787H660V793H656Z" fill="#8b0000"/>
<path d="M661 788H667V792H661ZM662 787H666V793H662Z" fill="#006400"/>
<path d="M667 788H673V792H667ZM668 787H672V793H668Z" fill="#006400"/>
<path d="M673 788H679V792H673ZM674 787H678V793H674Z" fill="#006400"/>
<path d="M679 788H685V792H679ZM680 787H684V793H680Z" fill="#006400"/>
<path d="M685 788H691V792H685ZM686 787H690V793H686Z" fill="#006400"/>
<path d="M691 788H697V792H691ZM692 787H696V793H692Z" fill="#006400"/>
<path d="M697 788H703V792H697ZM698 787H702V793H698Z" fill="#006400"/>
<path d="M703 788H709V792H703ZM704 787H708V793H704Z" fill="#006400"/>
<path d="M709 788H715V792H709ZM710 787H714V793H710Z" fill="#006400"/>
<path d="M715 788H721V792H715ZM716 787H720V793H716Z" fill="#006400"/>
<path d="M721 788H727V792H721ZM722 787H726V793H722Z" fill="#006400"/>
<path d="M727 788H733V792H727ZM728 787H732V793H728Z" fill="#006400"/>
<path d="M733 788H739V792H733ZM734 787H738V793H734Z" fill="#8b0000"/>
<path d="M739 788H745V792H739ZM740 787H744V793H740Z" fill="#8b0000"/>
<path d="M745 788H751V792H745ZM746 787H750V793H746Z" fill="#8b0000"/>
<path d="M751 788H757V792H751ZM752 787H756V793H752Z" fill="#8b0000"/>
<path d="M757 788H763V792H757ZM758 787H762V793H758Z" fill="#8b0000"/>
<path d="M763 788H769V792H763ZM764 787H768V793H764Z" fill="#8b0000"/>
<path d="M769 788H775V792H769ZM770 787H774V793H770Z" fill="#8b0000"/>
<path d="M775 788H781V792H775ZM776 787H780V793H776Z" fill="#8b0000"/>
<path d="M781 788H787V792H781ZM782 787H786V793H782Z" fill="#8b0000"/>
<path d="M787 788H793V792H787ZM788 787H792V793H788Z" fill="#8b0000"/>
<path d="M793 788H799V792H793ZM794 787H798V793H794Z" fill="#8b0000"/>
<path d="M799 788H805V792H799ZM800 787H804V793H800Z" fill="#8b0000"/>
<path d="M805 788H811V792H805ZM806 787H810V793H806Z" fill="#8b0000"/>
<path d="M811 788H817V792H811ZM812 787H816V793H812Z" fill="#8b0000"/>
<path d="M817 788H823V792H817ZM818 787H822V793H818Z" fill="#8b0000"/>
<path d="M823 788H829V792H823ZM824 787H828V793H824Z" fill="#8b0000"/>
<path d="M829 788H835V792H829ZM830 787H834V793H830Z" fill="#8b0000"/>
<path d="M835 788H841V792H835ZM836 787H840V793H836Z" fill="#8b0000"/>
<path d="M841 788H847V792H841ZM842 787H846V793H842Z" fill="#006400"/>
<path d="M847 788H853V792H847ZM848 787H852V793H848Z" fill="#8b0000"/>
<path d="M853 788H859V792H853ZM854 787H858V793H854Z" fill="#8b0000"/>
<path d="M859 788H865V792H859ZM860 787H864V793H860Z" fill="#8b0000"/>
<path d="M865 788H871V792H865ZM866 787H870V793H866Z" fill="#8b0000"/>
<path d="M871 788H877V792H871ZM872 787H876V793H872Z" fill="#8b0000"/>
<path d="M877 788H883V792H877ZM878 787H882V793H878Z" fill="#8b0000"/>
<path d="M883 788H889V792H883ZM884 787H888V793H884Z" fill="#8b0000"/>
<path d="M889 788H895V792H889ZM890 787H894V793H890Z" fill="#8b0000"/>
<path d="M895 788H901V792H895ZM896 787H900V793H896Z" fill="#8b0000"/>
<path d="M901 788H907V792H901ZM902 787H906V793H902Z" fill="#8b0000"/>
<path d="M907 788H913V792H907ZM908 787H912V793H908Z" fill="#8b0000"/>
<path d="M913 788H919V792H913ZM914 787H918V793H914Z" fill="#8b0000"/>
<path d="M919 788H925V792H919ZM920 787H924V793H920Z" fill="#8b0000"/>
<path d="M925 788H931V792H925ZM926 787H930V793H926Z" fill="#8b0000"/>
<path d="M931 788H937V792H931ZM932 787H936V793H932Z" fill="#006400"/>
<path d="M937 788H943V792H937ZM938 787H942V793H938Z" fill="#006400"/>
<path d="M943 788H949V792H943ZM944 787H948V793H944Z" fill="#006400"/>
<path d="M949 788H955V792H949ZM950 787H954V793H950Z" fill="#006400"/>
<path d="M955 788H961V792H955ZM956 787H960V793H956Z" fill="#006400"/>
<path d="M961 788H967V792H961ZM962 787H966V793H962Z" fill="#006400"/>
<path d="M967 788H973V792H967ZM968 787H972V793H968Z" fill="#006400"/>
<path d="M973 788H979V792H973ZM974 787H978V793H974Z" fill="#006400"/>
<path d="M979 788H985V792H979ZM980 787H984V793H980Z" fill="#006400"/>
<path d="M985 788H991V792H985ZM986 787H990V793H986Z" fill="#006400"/>
<path d="M991 788H997V792H991ZM992 787H996V793H992Z" fill="#006400"/>
<path d="M997 788H1003V792H997ZM998 787H1002V793H998Z" fill="#006400"/>
<path d="M1003 788H1009V792H1003ZM1004 787H1008V793H1004Z" fill="#006400"/>
<path d="M1009 788H1015V792H1009ZM1010 787H1014V793H1010Z" fill="#006400"/>
<path d="M1015 788H1021V792H1015ZM1016 787H1020V793H1016Z" fill="#006400"/>
<path d="M1021 788H1027V792H1021ZM1022 787H1026V793H1022Z" fill="#006400"/>
<path d="M1027 788H1033V792H1027ZM1028 787H1032V793H1028Z" fill="#8b0000"/>
<path d="M1033 788H1039V792H1033ZM1034 787H1038V793H1034Z" fill="#8b0000"/>
<path d="M1039 788H1045V792H1039ZM1040 787H1044V793H1040Z" fill="#8b0000"/>
<path d="M1045 788H1051V792H1045ZM1046 787H1050V793H1046Z" fill="#8b0000"/>
<path d="M1051 788H1057V792H1051ZM1052 787H1056V793H1052Z" fill="#8b0000"/>
<path d="M1057 788H1063V792H1057ZM1058 787H1062V793H1058Z" fill="#8b0000"/>
<path d="M1063 788H1069V792H1063ZM1064 787H1068V793H1064Z" fill="#8b0000"/>
<path d="M1069 788H1075V792H1069ZM1070 787H1074V793H1070Z" fill="#8b0000"/>
<path d="M1075 788H1081V792H1075ZM1076 787H1080V793H1076Z" fill="#8b0000"/>
<path d="M1081 788H1087V792H1081ZM1082 787H1086V793H1082Z" fill="#8b0000"/>
<path d="M1087 788H1093V792H1087ZM1088 787H1092V793H1088Z" fill="#8b0000"/>
<path d="M1093 788H1099V792H1093ZM1094 787H1098V793H1094Z" fill="#8b0000"/>
<path d="M1099 788H1105V792H1099ZM1100 787H1104V793H1100Z" fill="#8b0000"/>
<path d="M1105 788H1111V792H1105ZM1106 787H1110V793H1106Z" fill="#006400"/>
<path d="M1111 788H1117V792H1111ZM1112 787H1116V793H1112Z" fill="#006400"/>
<path d="M1117 788H1123V792H1117ZM1118 787H1122V793H1118Z" fill="#006400"/>
<path d="M1123 788H1129V792H1123ZM1124 787H1128V793H1124Z" fill="#006400"/>
<path d="M1129 788H1135V792H1129ZM1130 787H1134V793H1130Z" fill="#006400"/>
<path d="M1135 788H1141V792H1135ZM1136 787H1140V793H1136Z" fill="#8b0000"/>
<path d="M1141 788H1147V792H1141ZM1142 787H1146V793H1142Z" fill="#8b0000"/>
<path d="M1147 788H1153V792H1147ZM1148 787H1152V793H1148Z" fill="#8b0000"/>
<path d="M1153 788H1159V792H1153ZM1154 787H1158V793H1154Z" fill="#006400"/>
<path d="M1159 788H1165V792H1159ZM1160 787H1164V793H1160Z" fill="#006400"/>
<path d="M1165 788H1171V792H1165ZM1166 787H1170V793H1166Z" fill="#006400"/>
<path d="M1171 788H1177V792H1171ZM1172 787H1176V793H1172Z" fill="#006400"/>
<path d="M1177 788H1183V792H1177ZM1178 787H1182V793H1178Z" fill="#006400"/>
<path d="M1183 788H1189V792H1183ZM1184 787H1188V793H1184Z" fill="#8b0000"/>
<path d="M1189 788H1195V792H1189ZM1190 787H1194V793H1190Z" fill="#8b0000"/>
<path d="M1195 788H1201V792H1195ZM1196 787H1200V793H1196Z" fill="#8b0000"/>
<path d="M1201 788H1207V792H1201ZM1202 787H1206V793H1202Z" fill="#8b0000"/>
<path d="M1207 788H1213V792H1207ZM1208 787H1212V793H1208Z" fill="#006400"/>
<path d="M1213 788H1219V792H1213ZM1214 787H1218V793H1214Z" fill="#006400"/>
<path d="M1219 788H1225V792H1219ZM1220 787H1224V793H1220Z" fill="#006400"/>
<path d="M1225 788H1231V792H1225ZM1226 787H1230V793H1226Z" fill="#006400"/>
<path d="M1231 788H1237V792H1231ZM1232 787H1236V793H1232Z" fill="#006400"/>
<path d="M1237 788H1243V792H1237ZM1238 787H1242V793H1238Z" fill="#8b0000"/>
<path d="M1243 788H1249V792H1243ZM1244 787H1248V793H1244Z" fill="#8b0000"/>
<path d="M1249 788H1255V792H1249ZM1250 787H1254V793H1250Z" fill="#8b0000"/>
<path d="M1255 788H1261V792H1255ZM1256 787H1260V793H1256Z" fill="#8b0000"/>
<path d="M1261 788H1267V792H1261ZM1262 787H1266V793H1262Z" fill="#8b0000"/>
<path d="M1267 788H1273V792H1267ZM1268 787H1272V793H1268Z" fill="#8b0000"/>
<path d="M1273 788H1279V792H1273ZM1274 787H1278V793H1274Z" fill="#8b0000"/>
<path d="M1279 788H1285V792H1279ZM1280 787H1284V793H1280Z" fill="#8b0000"/>
<path d="M1285 788H1291V792H1285ZM1286 787H1290V793H1286Z" fill="#8b0000"/>
<path d="M1291 788H1297V792H1291ZM1292 787H1296V793H1292Z" fill="#8b0000"/>
<path d="M1297 788H1303V792H1297ZM1298 787H1302V793H1298Z" fill="#8b0000"/>
<path d="M1303 788H1309V792H1303ZM1304 787H1308V793H1304Z" fill="#8b0000"/>
<path d="M1309 788H1315V792H1309ZM1310 787H1314V793H1310Z" fill="#8b0000"/>
<path d="M1315 788H1321V792H1315ZM1316 787H1320V793H1316Z" fill="#8b0000"/>
<path d="M1321 788H1327V792H1321ZM1322 787H1326V793H1322Z" fill="#006400"/>
<path d="M1327 788H1333V792H1327ZM1328 787H1332V793H1328Z" fill="#006400"/>
<path d="M1333 788H1339V792H1333ZM1334 787H1338V793H1334Z" fill="#006400"/>
<path d="M1339 788H1345V792H1339ZM1340 787H1344V793H1340Z" fill="#006400"/>
<path d="M1345 788H1351V792H1345ZM1346 787H1350V793H1346Z" fill="#006400"/>
<path d="M1351 788H1357V792H1351ZM1352 787H1356V793H1352Z" fill="#006400"/>
<path d="M1357 788H1363V792H1357ZM1358 787H1362V793H1358Z" fill="#006400"/>
<path d="M1363 788H1369V792H1363ZM1364 787H1368V793H1364Z" fill="#006400"/>
<path d="M1369 788H1375V792H1369ZM1370 787H1374V793H1370Z" fill="#006400"/>
<path d="M1375 788H1381V792H1375ZM1376 787H1380V793H1376Z" fill="#006400"/>
<path d="M1381 788H1387V792H1381ZM1382 787H1386V793H1382Z" fill="#006400"/>
<path d="M1387 788H1393V792H1387ZM1388 787H1392V793H1388Z" fill="#006400"/>
<path d="M1393 788H1399V792H1393ZM1394 787H1398V793H1394Z" fill="#006400"/>
<path d="M1399 788H1405V792H1399ZM1400 787H1404V793H1400Z" fill="#006400"/>
<path d="M1405 788H1411V792H1405ZM1406 787H1410V793H1406Z" fill="#006400"/>
<path d="M1411 788H1417V792H1411ZM1412 787H1416V793H1412Z" fill="#006400"/>
<path d="M1417 788H1423V792H1417ZM1418 787H1422V793H1418Z" fill="#006400"/>
<path d="M1423 788H1429V792H1423ZM1424 787H1428V793H1424Z" fill="#8b0000"/>
<path d="M1429 788H1435V792H1429ZM1430 787H1434V793H1430Z" fill="#8b0000"/>
<path d="M1435 788H1441V792H1435ZM1436 787H1440V793H1436Z" fill="#8b0000"/>
<path d="M1441 788H1447V792H1441ZM1442 787H1446V793H1442Z" fill="#8b0000"/>
<path d="M1447 788H1453V792H1447ZM1448 787H1452V793H1448Z" fill="#8b0000"/>
<path d="M1453 788H1459V792H1453ZM1454 787H1458V793H1454Z" fill="#8b0000"/>
<path d="M1459 788H1465V792H1459ZM1460 787H1464V793H1460Z" fill="#8b0000"/>
<path d="M1465 788H1471V792H1465ZM1466 787H1470V793H1466Z" fill="#8b0000"/>
<path d="M1471 788H1477V792H1471ZM1472 787H1476V793H1472Z" fill="#006400"/>
<path d="M1477 788H1483V792H1477ZM1478 787H1482V793H1478Z" fill="#006400"/>
<path d="M1483 788H1489V792H1483ZM1484 787H1488V793H1484Z" fill="#006400"/>
<path d="M1489 788H1495V792H1489ZM1490 787H1494V793H1490Z" fill="#006400"/>
<path d="M1495 788H1501V792H1495ZM1496 787H1500V793H1496Z" fill="#006400"/>
<path d="M1501 788H1507V792H1501ZM1502 787H1506V793H1502Z" fill="#006400"/>
<path d="M1507 788H1513V792H1507ZM1508 787H1512V793H1508Z" fill="#006400"/>
<path d="M1513 788H1519V792H1513ZM1514 787H1518V793H1514Z" fill="#006400"/>
<path d="M1519 788H1525V792H1519ZM1520 787H1524V793H1520Z" fill="#006400"/>
<path d="M1525 788H1531V792H1525ZM1526 787H1530V793H1526Z" fill="#8b0000"/>
<path d="M1531 788H1537V792H1531ZM1532 787H1536V793H1532Z" fill="#8b0000"/>
<path d="M1537 788H1543V792H1537ZM1538 787H1542V793H1538Z" fill="#8b0000"/>
<path d="M1543 788H1549V792H1543ZM1544 787H1548V793H1544Z" fill="#8b0000"/>
<path d="M1549 788H1555V792H1549ZM1550 787H1554V793H1550Z" fill="#8b0000"/>
<path d="M1595 790L1601 784H1609V790Z" fill="#800000" stroke="#d3d3d3" stroke-width=".6"/>
<path d="M1594 794L1600 787H1659V800H1600Z" fill="#ff0000" stroke="#f0f0f0" stroke-width=".6"/><text x="1601" y="798" font-size="11" fill="#fff" font-family="Liberation Sans">-0,0000613</text>
</svg>
<div class="a" style="left:1645px;top:55px;width:24px;height:24px;background:#5f7286"></div>
<div class="a" style="left:1647px;top:57px;width:21px;height:21px;border:1px solid #fff;border-radius:3px;background:#efefef;box-shadow:inset 0 -1px 0 #d0d0d0"></div>
<svg class="a" style="left:1651px;top:62px" width="12" height="8"><path d="M1 1H11L6 6.5Z" fill="#000"/></svg>
<svg class="a" style="left:1665px;top:30px" width="4" height="25"><path d="M0 .5H3.5V4M3.5 21V24.5H0" stroke="#444" fill="none"/></svg>
<div class="a" style="left:545px;top:246px;width:586px;height:486px;background:#2d2d2d;box-shadow:1px 1px 2px rgba(0,0,0,.3)"></div>
<div class="a" style="left:546px;top:247px;width:584px;height:484px;background:#4ad4f4"></div>
<div class="a" style="left:546px;top:247px;width:583px;height:483px;background:#fff"></div>
<div class="a" style="left:547px;top:248px;width:582px;height:482px;background:linear-gradient(#98b4d2 0px,#a6c0dc 14px,#bad2ea 26px,#bad0e8 100%)"></div>
<div class="t" style="left:553px;top:257px;font-size:12px;color:#000">Indicators</div>
<div class="a" style="left:1108px;top:256px;width:14px;height:14px;border:1px solid #4a0f18;border-radius:3px;background:linear-gradient(#f0b0a0,#d85040 50%,#c83828 51%,#e89080)"></div>
<svg class="a" style="left:1110px;top:258px" width="10" height="10"><path d="M2 2L8 8M8 2L2 8" stroke="#3a3a50" stroke-width="3"/><path d="M2 2L8 8M8 2L2 8" stroke="#fff" stroke-width="1.6"/></svg>
<div class="a" style="left:553px;top:272px;width:570px;height:452px;background:#f0f0f0"></div>
<div class="a" style="left:553px;top:658px;width:570px;height:1px;background:#fff"></div>
<div class="a" style="left:553px;top:272px;width:570px;height:2px;background:linear-gradient(#6a6a6a,#8a8a8a)"></div>
<div class="a" style="left:553px;top:272px;width:2px;height:386px;background:#a0a0a0"></div>
<div class="a" style="left:553px;top:272px;width:253px;height:215px;background:#fff;border-top:3px solid #6e6e6e;border-left:2px solid #7a7a7a;border-bottom:1px solid #e0e0e0;border-right:1px solid #7a8494;overflow:hidden">
<div class="li" style="top:2px;left:4px;color:#000">StochRSI</div>
<div class="li" style="top:15px;left:4px;color:#000">SUM</div>
<div class="li" style="top:28px;left:4px;color:#000">Swing</div>
<div class="li" style="top:41px;left:4px;color:#000">T3</div>
<div class="li" style="top:54px;left:4px;color:#000">TEMA</div>
<div class="a" style="left:2px;top:66px;width:230px;height:13px;background:#3399ff"></div>
<div class="li" style="top:67px;left:3px;color:#fff">tftFlipTrade</div>
<div class="li" style="top:80px;left:4px;color:#000">tftMomoCL</div>
<div class="li" style="top:93px;left:4px;color:#000">tftStopGo</div>
<div class="li" style="top:106px;left:4px;color:#000">tftTouchGo</div>
<div class="li" style="top:119px;left:4px;color:#000">tftTrendCombo</div>
<div class="li" style="top:132px;left:4px;color:#000">tftTurnTrade</div>
<div class="li" style="top:145px;left:4px;color:#000">TickCounter</div>
<div class="li" style="top:158px;left:4px;color:#000">TMA</div>
<div class="li" style="top:171px;left:4px;color:#000">TRIX</div>
<div class="li" style="top:184px;left:4px;color:#000">TSF</div>
<div class="li" style="top:197px;left:4px;color:#000">TSI</div>
</div>
<div class="a" style="left:788px;top:275px;width:17px;height:211px;background:#ececec"></div>
<svg class="a" style="left:791px;top:280px" width="11" height="8"><path d="M1.5 6.5L5.5 2.5L9.5 6.5" fill="#333"/></svg>
<svg class="a" style="left:791px;top:472px" width="11" height="8"><path d="M1.5 1.5L5.5 5.5L9.5 1.5" fill="#444"/></svg>
<div class="a" style="left:789px;top:413px;width:15px;height:19px;border:1px solid #9a9a9a;border-radius:2px;background:linear-gradient(90deg,#f4f4f4,#dedede)"></div>
<svg class="a" style="left:792px;top:418px" width="9" height="9"><path d="M1 1.5H8M1 4.5H8M1 7.5H8" stroke="#555"/></svg>
<div class="a" style="left:555px;top:491px;width:251px;height:121px;background:#fff;border:1px solid #a8a8a8;overflow:hidden">
<div class="li" style="top:2px;left:2px;color:#000;letter-spacing:-0.2px">tftTrendCombo(Median of $EURUSD (15 Min))</div>
<div class="li" style="top:15px;left:2px;color:#000;letter-spacing:-0.2px">tftMomoCL($EURUSD (15 Min))</div>
<div class="li" style="top:28px;left:2px;color:#000;letter-spacing:-0.2px">tftTurnTrade(Median of $EURUSD (15 Min),Color [Lime]</div>
<div class="li" style="top:41px;left:2px;color:#000;letter-spacing:-0.2px">tftTurnTrade(Median of $EURUSD (15 Min),Color [Red]</div>
<div class="li" style="top:54px;left:2px;color:#000;letter-spacing:-0.2px">tftFlipTrade(Median of $EURUSD (15 Min),Color [Lime]</div>
<div class="li" style="top:67px;left:2px;color:#000;letter-spacing:-0.2px">tftFlipTrade(Median of $EURUSD (15 Min),Color [Red]</div>
<div class="li" style="top:80px;left:2px;color:#000;letter-spacing:-0.2px">tftTurnTrade(Median of $EURUSD (15 Min),Color [Yellow]</div>
<div class="li" style="top:93px;left:2px;color:#000;letter-spacing:-0.2px">tftFlipTrade(Median of $EURUSD (15 Min),Color [Yellow]</div>
</div>
<div class="btn" style="left:578px;top:628px;width:66px;height:23px;line-height:21px;color:#000;">New</div>
<div class="btn" style="left:715px;top:628px;width:66px;height:23px;line-height:21px;color:#a0a0a0;border-color:#b8b8b8;background:#f4f4f4;">Remove</div>
<div class="btn" style="left:642px;top:688px;width:79px;height:23px;line-height:21px;color:#000;border-color:#3c7fb1;box-shadow:inset 0 0 0 1px #5ad0f8;">OK</div>
<div class="btn" style="left:799px;top:688px;width:78px;height:23px;line-height:21px;color:#000;">Apply</div>
<div class="btn" style="left:956px;top:688px;width:78px;height:23px;line-height:21px;color:#000;">Close</div>
<div class="a" style="left:862px;top:272px;width:261px;height:324px;background:#c8c8c8;border-top:2px solid #6e6e6e;border-left:1px solid #8a8a8a;border-right:2px solid #fff;border-bottom:1px solid #fff;overflow:hidden">
<div class="pn" style="top:2px;">Offset</div>
<div class="pv" style="top:2px">0</div>
<div class="pn" style="top:18px;">Show Longs?</div>
<div class="pv" style="top:18px">True</div>
<div class="pn" style="top:34px;">Show Shorts?</div>
<div class="pv" style="top:34px">True</div>
<div class="pn" style="top:50px;">Signal Color</div>
<div class="pv" style="top:50px"><span style="display:inline-block;width:20px;height:12px;border:1px solid #000;background:#fff;vertical-align:middle;margin-top:-2px"></span>&nbsp;&nbsp; White</div>
<div class="pc" style="top:66px">Data</div>
<div class="a" style="left:2px;top:70px;width:9px;height:9px;border:1px solid #222;background:#f8f8f8"></div><div class="a" style="left:4px;top:74px;width:5px;height:1px;background:#000"></div>
<div class="pn" style="top:82px;">Calculate on bar close</div>
<div class="pv" style="top:82px">True</div>
<div class="pn" style="top:98px;">Input series</div>
<div class="pv" style="top:98px">$EURUSD (15 Min)</div>
<div class="pn" style="top:114px;">Maximum bars look back</div>
<div class="pv" style="top:114px">TwoHundredFiftySix</div>
<div class="pc" style="top:130px">Visual</div>
<div class="a" style="left:2px;top:134px;width:9px;height:9px;border:1px solid #222;background:#f8f8f8"></div><div class="a" style="left:4px;top:138px;width:5px;height:1px;background:#000"></div>
<div class="pn" style="top:146px;">Auto scale</div>
<div class="pv" style="top:146px">True</div>
<div class="pn" style="top:162px;">Displacement</div>
<div class="pv" style="top:162px">0</div>
<div class="pn" style="top:178px;">Display in Data Box</div>
<div class="pv" style="top:178px">False</div>
<div class="pn" style="top:194px;background:#c8c8c8;">Label</div>
<div class="pv" style="top:194px">tftFlipTrade</div>
<div class="pn" style="top:210px;">Panel</div>
<div class="pv" style="top:210px">1</div>
<div class="pn" style="top:226px;">Price marker(s)</div>
<div class="pv" style="top:226px">True</div>
<div class="pn" style="top:242px;">Scale justification</div>
<div class="pv" style="top:242px">Right</div>
<div class="pc" style="top:258px">Alerts</div>
<div class="a" style="left:2px;top:262px;width:9px;height:9px;border:1px solid #222;background:#f8f8f8"></div><div class="a" style="left:4px;top:266px;width:5px;height:1px;background:#000"></div>
<div class="pn" style="top:274px;">01. Play Alert?</div>
<div class="pv" style="top:274px">False</div>
<div class="pn" style="top:290px;">03. Long Alert</div>
<div class="pv" style="top:290px">Alert4.wav</div>
<div class="pn" style="top:306px;">04. Short Alert</div>
<div class="pv" style="top:306px">Alert4.wav</div>
</div>
<div class="a" style="left:1104px;top:275px;width:17px;height:320px;background:#ececec"></div>
<svg class="a" style="left:1107px;top:280px" width="11" height="8"><path d="M1.5 6.5L5.5 2.5L9.5 6.5" fill="#9a9a9a"/></svg>
<svg class="a" style="left:1107px;top:582px" width="11" height="8"><path d="M1.5 1.5L5.5 5.5L9.5 1.5" fill="#9a9a9a"/></svg>
<div class="a" style="left:862px;top:598px;width:260px;height:60px;border:1px solid #a0a0a0;background:#f0f0f0"></div>
<div class="t" style="left:867px;top:602px;font-size:11px;font-weight:bold;color:#000">Label</div>
<div class="t" style="left:867px;top:617px;font-size:11px;color:#000">Show TFT Flip-Trade Setups</div>
<svg class="a" style="left:1112px;top:713px" width="10" height="10"><g fill="#8a8a8a"><rect x="7" y="1" width="2" height="2"/><rect x="4" y="4" width="2" height="2"/><rect x="7" y="4" width="2" height="2"/><rect x="1" y="7" width="2" height="2"/><rect x="4" y="7" width="2" height="2"/><rect x="7" y="7" width="2" height="2"/></g></svg>
</body></html>
